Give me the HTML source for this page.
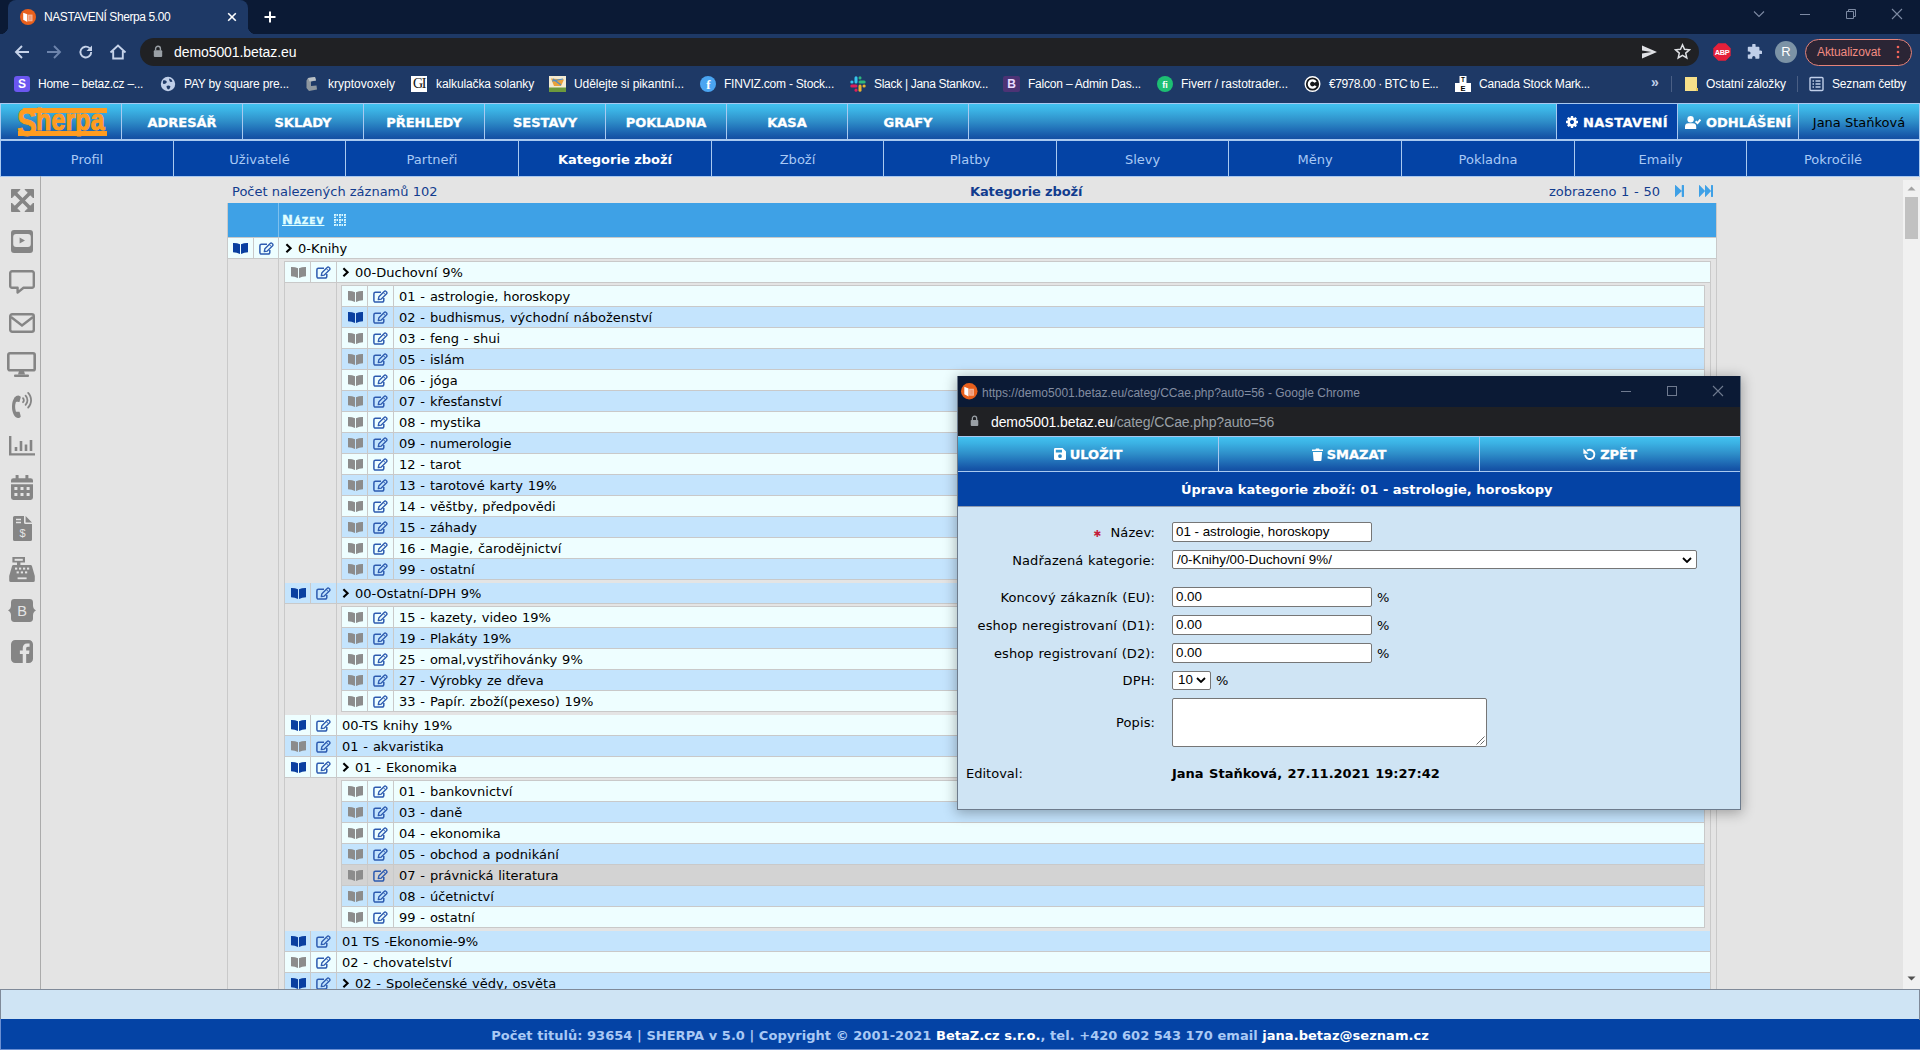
<!DOCTYPE html>
<html lang="cs"><head><meta charset="utf-8"><title>NASTAVENÍ Sherpa 5.00</title>
<style>
*{box-sizing:border-box;margin:0;padding:0}
html,body{width:1920px;height:1050px;overflow:hidden;background:#e4e4e4}
body{position:relative;font-family:"DejaVu Sans","Liberation Sans",sans-serif;font-size:13px;color:#000}
.abs{position:absolute}
.ui{font-family:"Liberation Sans",sans-serif}
.t{position:absolute;white-space:pre;line-height:1}
/* chrome top */
#tabstrip{position:absolute;left:0;top:0;width:1920px;height:34px;background:#0b1a35}
#tab{position:absolute;left:8px;top:0;width:240px;height:34px;background:#1e3966;border-radius:8px 8px 0 0}
#tab:before,#tab:after{content:"";position:absolute;bottom:0;width:8px;height:8px;background:radial-gradient(circle at 0 0,transparent 8px,#1e3966 8.5px)}
#tab:before{left:-8px}
#tab:after{right:-8px;background:radial-gradient(circle at 100% 0,transparent 8px,#1e3966 8.5px)}
#toolbar{position:absolute;left:0;top:34px;width:1920px;height:69px;background:#1e3966}
#omni{position:absolute;left:140px;top:38px;width:1559px;height:28px;border-radius:14px;background:#202124}
.bm{position:absolute;top:77px;font-family:"Liberation Sans",sans-serif;font-size:12px;color:#fff;white-space:pre;line-height:15px}
/* app header */
#nav{position:absolute;left:0;top:103px;width:1920px;height:74px;background:#a9c9f0}
.nc{position:absolute;top:104px;height:35px;background:linear-gradient(#42c2f0 0%,#3bb2e4 18%,#2f90ca 48%,#2170b8 72%,#1656a8 92%,#144fa3 100%);color:#fff;font-weight:bold;font-size:13px;text-align:center;line-height:37px;white-space:pre;-webkit-text-stroke:.3px #fff}
#subnav{display:none}
.sc{position:absolute;top:0;height:35px;background:#0443a5;color:#a9c9f5;font-size:13px;text-align:center;line-height:37px;white-space:pre}
/* content */
.row{position:absolute;height:20px;font-size:13px;line-height:20px;white-space:pre;word-spacing:.7px}
.row .c{position:absolute;top:0;height:20px}
.l{background:#eefeff}.d{background:#c4e4fd}.h{background:#d3d3d3}
.ln{position:absolute;background:#c9c9c9}

</style></head>
<body>
<div id="tabstrip"></div><div id="toolbar"></div><div id="tab"></div>
<svg class="abs" style="left:20px;top:9px" width="16" height="16" viewBox="0 0 16 16"><circle cx="8" cy="8" r="8" fill="#e8601c"/><path d="M3.2 3.7 L7.3 5.3 V13.1 L3.2 10.8 Z" fill="#fff"/><path d="M7.9 5.6 H12.5 V12.3 H7.9 Z" fill="#f3b69c"/><path d="M9 6.6 H11.5 V11.3 H9 Z" fill="#ee9a78"/></svg>
<div class="t ui" style="left:44px;top:11px;font-size:12px;color:#fff;letter-spacing:-.42px">NASTAVENÍ Sherpa 5.00</div>
<svg class="abs" style="left:227px;top:12px" width="10" height="10" viewBox="0 0 10 10"><path d="M1.2 1.2 L8.8 8.8 M8.8 1.2 L1.2 8.8" stroke="#fff" stroke-width="1.6" fill="none"/></svg>
<svg class="abs" style="left:263px;top:10px" width="14" height="14" viewBox="0 0 14 14"><path d="M7 1.5 V12.5 M1.5 7 H12.5" stroke="#fff" stroke-width="2" fill="none"/></svg>
<svg class="abs" style="left:1752px;top:8px" width="14" height="12" viewBox="0 0 14 12"><path d="M2 3.5 L7 8.5 L12 3.5" stroke="#7d8aa3" stroke-width="1.1" fill="none"/></svg>
<div class="abs" style="left:1800px;top:14px;width:10px;height:1px;background:#7d8aa3"></div>
<svg class="abs" style="left:1845px;top:8px" width="12" height="12" viewBox="0 0 12 12"><path d="M1.5 3.5 H8.5 V10.5 H1.5 Z M3.5 3.5 V1.5 H10.5 V8.5 H8.5" stroke="#7d8aa3" stroke-width="1" fill="none"/></svg>
<svg class="abs" style="left:1891px;top:8px" width="12" height="12" viewBox="0 0 12 12"><path d="M1 1 L11 11 M11 1 L1 11" stroke="#7d8aa3" stroke-width="1.1" fill="none"/></svg>
<svg class="abs" style="left:14px;top:44px" width="16" height="16" viewBox="0 0 16 16"><path d="M15 8 H2.5 M8 2 L2 8 L8 14" stroke="#c6d3ea" stroke-width="1.9" fill="none"/></svg>
<svg class="abs" style="left:46px;top:44px" width="16" height="16" viewBox="0 0 16 16"><path d="M1 8 H13.5 M8 2 L14 8 L8 14" stroke="#6d84ac" stroke-width="1.9" fill="none"/></svg>
<svg class="abs" style="left:78px;top:44px" width="16" height="16" viewBox="0 0 16 16"><path d="M13.2 8 A5.4 5.4 0 1 1 11.6 4.2" stroke="#c6d3ea" stroke-width="1.9" fill="none"/><path d="M14 1.5 V7 H8.5 Z" fill="#c6d3ea"/></svg>
<svg class="abs" style="left:109px;top:43px" width="18" height="18" viewBox="0 0 18 18"><path d="M1.5 9.5 L9 2.5 L16.5 9.5 M4.2 8 V15.5 H13.8 V8" stroke="#c6d3ea" stroke-width="1.9" fill="none"/></svg>
<div id="omni"></div>
<svg class="abs" style="left:153px;top:45px" width="10" height="13" viewBox="0 0 10 13"><path d="M2.6 5.5 V3.6 a2.4 2.4 0 0 1 4.8 0 V5.5" stroke="#9aa0a6" stroke-width="1.4" fill="none"/><rect x="0.8" y="5.3" width="8.4" height="6.7" rx="1" fill="#9aa0a6"/></svg>
<div class="t ui" style="left:174px;top:45px;font-size:14px;color:#fff;letter-spacing:-.08px">demo5001.betaz.eu</div>
<svg class="abs" style="left:1641px;top:44px" width="17" height="16" viewBox="0 0 17 16"><path d="M1 1.5 L16 8 L1 14.5 L1 9.6 L10.5 8 L1 6.4 Z" fill="#dfe1e5"/></svg>
<svg class="abs" style="left:1674px;top:43px" width="17" height="17" viewBox="0 0 17 17"><path d="M8.5 1.8 L10.5 6.3 L15.4 6.8 L11.7 10.1 L12.8 14.9 L8.5 12.4 L4.2 14.9 L5.3 10.1 L1.6 6.8 L6.5 6.3 Z" stroke="#dfe1e5" stroke-width="1.5" fill="none" stroke-linejoin="miter"/></svg>
<svg class="abs" style="left:1713px;top:43px" width="18" height="18" viewBox="0 0 18 18"><path d="M5.3 0.3 H12.7 L17.7 5.3 V12.7 L12.7 17.7 H5.3 L0.3 12.7 V5.3 Z" fill="#e5203a"/><text x="9" y="11.7" text-anchor="middle" font-family="Liberation Sans,sans-serif" font-weight="bold" font-size="7.4" fill="#fff" letter-spacing="-.3">ABP</text></svg>
<svg class="abs" style="left:1746px;top:44px" width="16" height="16" viewBox="0 0 16 16"><path d="M6.2 1.2 a1.7 1.7 0 0 1 3.4 0 V2.8 H12.6 a0.8 0.8 0 0 1 .8 .8 V6.6 H14.8 a1.7 1.7 0 0 1 0 3.4 H13.4 V14 a.8 .8 0 0 1 -.8 .8 H9.4 V13.6 a1.6 1.6 0 0 0 -3.2 0 V14.8 H2.6 a.8 .8 0 0 1 -.8 -.8 V10.6 H3 a1.6 1.6 0 0 0 0 -3.2 H1.8 V3.6 a.8 .8 0 0 1 .8 -.8 H6.2 Z" fill="#c0cfe9"/></svg>
<div class="abs ui" style="left:1775px;top:41px;width:22px;height:22px;border-radius:11px;background:#7c93a6;color:#fff;font-size:13px;line-height:22px;text-align:center">R</div>
<div class="abs" style="left:1805px;top:39px;width:107px;height:27px;border-radius:14px;border:1px solid #e58379;background:#2b2535"></div>
<div class="t ui" style="left:1817px;top:46px;font-size:12px;color:#f28b82;letter-spacing:-.1px">Aktualizovat</div>
<svg class="abs" style="left:1896px;top:45px" width="4" height="14" viewBox="0 0 4 14"><circle cx="2" cy="2" r="1.3" fill="#f2645a"/><circle cx="2" cy="7" r="1.3" fill="#f2645a"/><circle cx="2" cy="12" r="1.3" fill="#f2645a"/></svg>
<div class="abs ui" style="left:14px;top:76px;width:16px;height:16px;border-radius:3px;background:#6b57f0;color:#fff;font-weight:bold;font-size:12px;line-height:16px;text-align:center">S</div>
<div class="bm" style="left:38px;letter-spacing:-0.25px">Home – betaz.cz –...</div>
<svg class="abs" style="left:160px;top:76px" width="16" height="16" viewBox="0 0 16 16"><circle cx="8" cy="8" r="7.2" fill="#c0cfe9"/><path d="M3 4.5 Q6 3.5 7 6 Q5.5 8.5 3.5 8 Q2.5 7 3 4.5 Z M9 2.5 Q12 3 12.5 5.5 Q10.5 6.5 9.5 5 Z M6.5 10 Q9 9 10.5 10.5 Q10 13 8 13.5 Q6.5 12.5 6.5 10 Z" fill="#1f3a68"/></svg>
<div class="bm" style="left:184px;letter-spacing:-0.19px">PAY by square pre...</div>
<svg class="abs" style="left:304px;top:76px" width="16" height="16" viewBox="0 0 16 16"><path d="M4 2 L11 1 L12 4.5 L7 5.5 L7 10 L12.5 9.5 L13 13.5 L5 15 L2.5 12 L2.5 4.5 Z" fill="#8e979f"/><path d="M4 2 L11 1 L12 4.5 L5.5 5.5 Z" fill="#b9c0c6"/></svg>
<div class="bm" style="left:328px;letter-spacing:0.02px">kryptovoxely</div>
<div class="abs" style="left:411px;top:76px;width:16px;height:16px;background:#fff;color:#111;font-family:'Liberation Serif',serif;font-size:14px;line-height:16px;text-align:center;letter-spacing:-1.5px;overflow:hidden">GI</div>
<div class="bm" style="left:436px;letter-spacing:-0.11px">kalkulačka solanky</div>
<svg class="abs" style="left:549px;top:76px" width="17" height="16" viewBox="0 0 17 16"><rect width="17" height="16" fill="#f3ead2"/><rect y="11.5" width="17" height="4.5" fill="#6d9a3c"/><path d="M2 2.5 L15 3.5 L12 10 L5 10 Z" fill="#e9a23b"/><path d="M3 5 L14 3 M4 3 L12 9" stroke="#4f8ec9" stroke-width="1.2"/></svg>
<div class="bm" style="left:574px;letter-spacing:-0.06px">Udělejte si pikantní...</div>
<svg class="abs" style="left:700px;top:76px" width="16" height="16" viewBox="0 0 16 16"><circle cx="8" cy="8" r="8" fill="#4aa5f2"/><text x="8.3" y="13" text-anchor="middle" font-family="Liberation Serif,serif" font-weight="bold" font-size="13" fill="#fff">f</text></svg>
<div class="bm" style="left:724px;letter-spacing:-0.22px">FINVIZ.com - Stock...</div>
<svg class="abs" style="left:850px;top:76px" width="16" height="16" viewBox="0 0 16 16"><g stroke-width="3" stroke-linecap="round"><path d="M6 1.8 V6" stroke="#36c5f0"/><path d="M1.8 6 H2" stroke="#36c5f0"/><path d="M10 10 V14.2" stroke="#ecb22e"/><path d="M14 10 H14.2" stroke="#ecb22e"/><path d="M10 6 H14.2" stroke="#2eb67d"/><path d="M10 1.8 V2" stroke="#2eb67d"/><path d="M1.8 10 H6" stroke="#e01e5a"/><path d="M6 14 V14.2" stroke="#e01e5a"/></g></svg>
<div class="bm" style="left:874px;letter-spacing:-0.30px">Slack | Jana Stankov...</div>
<div class="abs ui" style="left:1003px;top:76px;width:17px;height:16px;border-radius:2px;background:#4d3375;color:#eadcff;font-weight:bold;font-size:12px;line-height:16px;text-align:center">B</div>
<div class="bm" style="left:1028px;letter-spacing:-0.21px">Falcon – Admin Das...</div>
<svg class="abs" style="left:1157px;top:76px" width="16" height="16" viewBox="0 0 16 16"><circle cx="8" cy="8" r="8" fill="#1dbf73"/><text x="8" y="11.6" text-anchor="middle" font-family="Liberation Sans,sans-serif" font-weight="bold" font-size="9" fill="#fff">fi</text></svg>
<div class="bm" style="left:1181px;letter-spacing:-0.04px">Fiverr / rastotrader...</div>
<svg class="abs" style="left:1304px;top:76px" width="17" height="16" viewBox="0 0 17 16"><circle cx="8.5" cy="8" r="7.3" fill="#15171a" stroke="#fff" stroke-width="1.4"/><path d="M11.6 6.2 A3.6 3.6 0 1 0 11.6 9.8" stroke="#fff" stroke-width="2.4" fill="none"/></svg>
<div class="bm" style="left:1329px;letter-spacing:-0.47px">€7978.00 · BTC to E...</div>
<svg class="abs" style="left:1455px;top:76px" width="16" height="16" viewBox="0 0 16 16"><rect x="4.5" y="0" width="7" height="7" fill="#fff"/><rect x="0" y="7" width="16" height="9" fill="#fff"/><text x="8" y="6" text-anchor="middle" font-family="Liberation Sans,sans-serif" font-weight="bold" font-size="6.5" fill="#000">T</text><text x="8" y="14.6" text-anchor="middle" font-family="Liberation Sans,sans-serif" font-weight="bold" font-size="7.5" fill="#000">E</text></svg>
<div class="bm" style="left:1479px;letter-spacing:-0.22px">Canada Stock Mark...</div>
<svg class="abs" style="left:1684px;top:76px" width="15" height="16" viewBox="0 0 15 16"><path d="M1 1 H13 V13 H14 V15 H1 Z" fill="#f7e08a"/><path d="M12 12 H14 V15 H12 Z" fill="#e9c95a"/></svg>
<div class="bm" style="left:1706px;letter-spacing:-0.14px">Ostatní záložky</div>
<svg class="abs" style="left:1809px;top:76px" width="15" height="16" viewBox="0 0 15 16"><rect x="1" y="1.5" width="13" height="13" rx="1" fill="none" stroke="#c0cfe9" stroke-width="1.4"/><path d="M3.5 5 H5 M6.5 5 H11.5 M3.5 8 H5 M6.5 8 H11.5 M3.5 11 H5 M6.5 11 H11.5" stroke="#c0cfe9" stroke-width="1.4"/></svg>
<div class="bm" style="left:1832px;letter-spacing:-0.17px">Seznam četby</div>
<div class="t ui" style="left:1651px;top:75px;font-size:14px;color:#c0cfe9;font-weight:bold">»</div>
<div class="abs" style="left:1671px;top:76px;width:1px;height:16px;background:#4a5f85"></div>
<div class="abs" style="left:1797px;top:76px;width:1px;height:16px;background:#4a5f85"></div>
<div id="nav"></div>
<div class="nc" style="left:1px;width:120px;"><span class="t" style="left:16px;top:4px;width:90px;height:28px;overflow:visible"><span class="abs" style="left:6px;top:.3px;width:83.7px;height:4.3px;background:#ff9c1f"></span><span class="abs" style="left:1px;top:23.2px;width:88.7px;height:4.6px;background:#ff9c1f"></span><span class="t ui" style="left:0px;top:-4.4px;font-size:38px;font-weight:bold;color:#ff9c1f;transform-origin:0 0;transform:scale(.78,1);-webkit-text-stroke:.8px #ff9c1f">S</span><span class="t ui" style="left:18.5px;top:-2.3px;font-size:29px;font-weight:bold;color:#ff9c1f;transform-origin:0 0;transform:scale(.855,1);letter-spacing:.3px;-webkit-text-stroke:1.1px #ff9c1f">herpa</span></span></div>
<div class="nc" style="left:122px;width:120px;">ADRESÁŘ</div>
<div class="nc" style="left:243px;width:120px;">SKLADY</div>
<div class="nc" style="left:364px;width:120px;">PŘEHLEDY</div>
<div class="nc" style="left:485px;width:120px;">SESTAVY</div>
<div class="nc" style="left:606px;width:120px;">POKLADNA</div>
<div class="nc" style="left:727px;width:120px;">KASA</div>
<div class="nc" style="left:848px;width:120px;">GRAFY</div>
<div class="nc" style="left:969px;width:587px;"></div>
<div class="nc" style="left:1557px;width:120px;background:#0443a5;letter-spacing:.33px;"><svg style="vertical-align:-1px;margin-right:5px" width="12" height="12" viewBox="0 -1408 1536 1536" preserveAspectRatio="none"><path transform="scale(1,-1)" fill="#fff" d="M949 459Q1024 534 1024 640Q1024 746 949 821Q874 896 768 896Q662 896 587 821Q512 746 512 640Q512 534 587 459Q662 384 768 384Q874 384 949 459ZM1536 749V527Q1536 515 1528 504Q1520 493 1508 491L1323 463Q1304 409 1284 372Q1319 322 1391 234Q1401 222 1401 209Q1401 196 1392 186Q1365 149 1293 78Q1221 7 1199 7Q1187 7 1173 16L1035 124Q991 101 944 86Q928 -50 915 -100Q908 -128 879 -128H657Q643 -128 632 -120Q622 -111 621 -98L593 86Q544 102 503 123L362 16Q352 7 337 7Q323 7 312 18Q186 132 147 186Q140 196 140 209Q140 221 148 232Q163 253 199 298Q235 344 253 369Q226 419 212 468L29 495Q16 497 8 508Q0 518 0 531V753Q0 765 8 776Q16 787 27 789L213 817Q227 863 252 909Q212 966 145 1047Q135 1059 135 1071Q135 1081 144 1094Q170 1130 242 1202Q315 1273 337 1273Q350 1273 363 1263L501 1156Q545 1179 592 1194Q608 1330 621 1380Q628 1408 657 1408H879Q893 1408 904 1400Q914 1391 915 1378L943 1194Q992 1178 1033 1157L1175 1264Q1184 1273 1199 1273Q1212 1273 1224 1263Q1353 1144 1389 1093Q1396 1085 1396 1071Q1396 1059 1388 1048Q1373 1027 1337 982Q1301 936 1283 911Q1309 861 1324 813L1507 785Q1520 783 1528 772Q1536 762 1536 749Z"/></svg>NASTAVENÍ</div>
<div class="nc" style="left:1678px;width:120px;"><svg width="16" height="13" viewBox="0 0 16 13" style="vertical-align:-2px;margin-right:5px"><circle cx="5.6" cy="3.2" r="3.2" fill="#fff"/><path d="M0 13 V10.6 a3.4 3.4 0 0 1 3.4 -3.4 H7.8 a3.4 3.4 0 0 1 3.4 3.4 V13 Z" fill="#fff"/><path d="M10.6 5.2 L12.5 7.1 L15.4 3.6" stroke="#fff" stroke-width="2" fill="none"/></svg>ODHLÁŠENÍ</div>
<div class="nc" style="left:1799px;width:120px;color:#000;font-weight:normal;-webkit-text-stroke:0;">Jana Staňková</div>
<div id="subnav"></div>
<div class="sc" style="top:141px;left:1px;width:172px;">Profil</div>
<div class="sc" style="top:141px;left:174px;width:171px;">Uživatelé</div>
<div class="sc" style="top:141px;left:346px;width:172px;">Partneři</div>
<div class="sc" style="top:141px;left:519px;width:192px;color:#fff;font-weight:bold;">Kategorie zboží</div>
<div class="sc" style="top:141px;left:712px;width:171px;">Zboží</div>
<div class="sc" style="top:141px;left:884px;width:172px;">Platby</div>
<div class="sc" style="top:141px;left:1057px;width:171px;">Slevy</div>
<div class="sc" style="top:141px;left:1229px;width:172px;">Měny</div>
<div class="sc" style="top:141px;left:1402px;width:172px;">Pokladna</div>
<div class="sc" style="top:141px;left:1575px;width:171px;">Emaily</div>
<div class="sc" style="top:141px;left:1747px;width:172px;">Pokročilé</div>
<div class="abs" style="left:40px;top:176px;width:1px;height:813px;background:#ababab"></div>
<svg class="abs" style="left:11px;top:189px" width="23" height="23" viewBox="0 0 23 23"><path d="M4 4 L19 19 M19 4 L4 19" stroke="#858585" stroke-width="3.6"/><path d="M0.5 0.5 H9 L0.5 9 Z M22.5 0.5 V9 L14 0.5 Z M0.5 22.5 V14 L9 22.5 Z M22.5 22.5 H14 L22.5 14 Z" fill="#858585" stroke="#858585" stroke-width="1" stroke-linejoin="round"/></svg>
<svg class="abs" style="left:11px;top:230px" width="22" height="23" viewBox="0 0 22 23"><rect width="22" height="23" rx="3" fill="#858585"/><rect x="2.2" y="4" width="17.6" height="13" rx="3" fill="#e4e4e4"/><path d="M8.6 7.6 L14 10.5 L8.6 13.4 Z" fill="#858585"/></svg>
<svg class="abs" style="left:9px;top:270px" width="26" height="24" viewBox="0 0 26 24"><path d="M3 1.3 H23 a1.8 1.8 0 0 1 1.8 1.8 V16 a1.8 1.8 0 0 1 -1.8 1.8 H14.5 L8.6 22.6 V17.8 H3 a1.8 1.8 0 0 1 -1.8 -1.8 V3.1 A1.8 1.8 0 0 1 3 1.3 Z" fill="none" stroke="#858585" stroke-width="2.4" stroke-linejoin="round"/></svg>
<svg class="abs" style="left:9px;top:313px" width="26" height="20" viewBox="0 0 26 20"><rect x="1.2" y="1.2" width="23.6" height="17.6" rx="2" fill="none" stroke="#858585" stroke-width="2.4"/><path d="M2 4 L13 12.4 L24 4" fill="none" stroke="#858585" stroke-width="2.4"/></svg>
<svg class="abs" style="left:7px;top:352px" width="29" height="25" viewBox="0 0 29 25"><rect x="1.3" y="1.3" width="26.4" height="17" rx="1.6" fill="none" stroke="#858585" stroke-width="2.6"/><path d="M12 19 H17 L18 22.6 H11 Z" fill="#858585"/><rect x="7" y="22.6" width="15" height="2.4" rx="1" fill="#858585"/></svg>
<svg style="position:absolute;left:12px;top:392px;" width="20" height="26" viewBox="0 -1522 1408 1778" preserveAspectRatio="none"><path transform="scale(1,-1)" fill="#858585" d="M617 -153Q617 -142 604 -95Q591 -48 573 12Q555 72 553 81Q552 85 548 108Q544 130 540 144Q535 157 526 165Q511 179 475 179Q452 179 405 174Q358 168 334 168Q300 168 287 179Q281 184 276 194Q271 205 268 214Q266 224 262 238Q258 253 257 257Q220 385 220 512Q220 639 257 767Q258 771 262 786Q266 800 268 810Q271 819 276 830Q281 840 287 845Q300 856 334 856Q358 856 405 850Q452 845 475 845Q511 845 526 859Q535 867 540 880Q544 894 548 916Q552 939 553 943Q555 952 573 1012Q591 1072 604 1119Q617 1166 617 1177Q617 1199 574 1230Q530 1260 498 1272Q478 1280 453 1280Q419 1280 355 1262Q298 1245 258 1222Q219 1198 188 1156Q156 1113 142 1086Q127 1058 96 991Q90 979 87 972Q38 865 19 756Q0 647 0 512Q0 377 19 268Q38 159 87 52Q143 -70 170 -109Q233 -200 349 -236Q352 -237 355 -238Q419 -256 453 -256Q478 -256 498 -248Q530 -236 574 -206Q617 -175 617 -153ZM776 760Q750 760 731 779Q712 798 712 824Q712 851 731 870Q768 907 768 960Q768 1012 731 1051Q712 1070 712 1096Q712 1122 731 1141Q750 1160 776 1160Q802 1160 821 1141Q896 1066 896 960Q896 854 821 779Q800 760 776 760ZM912 598Q893 617 893 643Q893 669 912 688Q1024 802 1024 960Q1024 1118 912 1232Q893 1251 893 1277Q893 1303 912 1322Q931 1341 957 1341Q983 1341 1002 1322Q1152 1172 1152 960Q1152 748 1002 598Q984 579 957 579Q930 579 912 598ZM1093 417Q1074 436 1074 462Q1074 488 1093 507Q1183 598 1232 715Q1280 832 1280 960Q1280 1088 1232 1205Q1183 1322 1093 1413Q1074 1432 1074 1458Q1074 1484 1093 1503Q1112 1522 1138 1522Q1164 1522 1183 1503Q1292 1394 1350 1254Q1408 1114 1408 960Q1408 806 1350 666Q1292 526 1183 417Q1165 398 1138 398Q1111 398 1093 417Z"/></svg>
<svg class="abs" style="left:9px;top:436px" width="26" height="20" viewBox="0 0 26 20"><path d="M1.2 0 V18.4 H26" fill="none" stroke="#858585" stroke-width="2.4"/><path d="M7 15 V11 M12 15 V5 M17 15 V8.5 M22 15 V4" stroke="#858585" stroke-width="2.6"/></svg>
<svg class="abs" style="left:11px;top:475px" width="22" height="25" viewBox="0 0 22 25"><path d="M0 9.3 H22 V22.6 a2.4 2.4 0 0 1 -2.4 2.4 H2.4 A2.4 2.4 0 0 1 0 22.6 Z M2.4 3.2 H19.6 a2.4 2.4 0 0 1 2.4 2.4 V7.6 H0 V5.6 A2.4 2.4 0 0 1 2.4 3.2 Z" fill="#858585"/><rect x="4.6" y="0" width="3" height="5" rx=".6" fill="#858585"/><rect x="14.4" y="0" width="3" height="5" rx=".6" fill="#858585"/><g fill="#e4e4e4"><rect x="3.4" y="12" width="3" height="3"/><rect x="9.5" y="12" width="3" height="3"/><rect x="15.6" y="12" width="3" height="3"/><rect x="3.4" y="18" width="3" height="3"/><rect x="9.5" y="18" width="3" height="3"/><rect x="15.6" y="18" width="3" height="3"/></g></svg>
<svg class="abs" style="left:13px;top:516px" width="19" height="25" viewBox="0 0 19 25"><path d="M0 1.6 A1.6 1.6 0 0 1 1.6 0 H11 V6.4 a1.6 1.6 0 0 0 1.6 1.6 H19 V23.4 a1.6 1.6 0 0 1 -1.6 1.6 H1.6 A1.6 1.6 0 0 1 0 23.4 Z M12.6 0 L19 6.4 H12.6 Z" fill="#858585"/><path d="M3 3.6 H8 M3 6.6 H8" stroke="#e4e4e4" stroke-width="1.5"/><text x="9.5" y="20.5" text-anchor="middle" font-family="Liberation Sans,sans-serif" font-size="11" fill="#e4e4e4">$</text></svg>
<svg class="abs" style="left:9px;top:557px" width="26" height="25" viewBox="0 0 26 25"><path d="M3.4 0 H16 V5.6 H11.4 V8 H21.4 a1.6 1.6 0 0 1 1.6 1.3 L25.8 19 V23.4 a1.6 1.6 0 0 1 -1.6 1.6 H1.8 A1.6 1.6 0 0 1 .2 23.4 V19 L3 9.3 A1.6 1.6 0 0 1 4.6 8 H8 V5.6 H3.4 Z" fill="#858585"/><g fill="#e4e4e4"><rect x="5.6" y="1.8" width="8.2" height="2"/><rect x="6" y="10.6" width="2.2" height="2"/><rect x="10" y="10.6" width="2.2" height="2"/><rect x="14" y="10.6" width="2.2" height="2"/><rect x="18" y="10.6" width="2.2" height="2"/><rect x="7.6" y="14.4" width="2.2" height="2"/><rect x="11.8" y="14.4" width="2.2" height="2"/><rect x="16" y="14.4" width="2.2" height="2"/><rect x="8.6" y="20.4" width="9" height="1.8"/></g></svg>
<svg class="abs" style="left:8px;top:599px" width="28" height="23" viewBox="0 0 28 23"><path d="M6.4 0 H21.6 a3.4 3.4 0 0 1 3.4 3.4 V6.6 Q25 10 28 11.5 Q25 13 25 16.4 V19.6 a3.4 3.4 0 0 1 -3.4 3.4 H6.4 A3.4 3.4 0 0 1 3 19.6 V16.4 Q3 13 0 11.5 Q3 10 3 6.6 V3.4 A3.4 3.4 0 0 1 6.4 0 Z" fill="#858585"/><text x="14" y="16.6" text-anchor="middle" font-family="Liberation Sans,sans-serif" font-size="14.5" fill="#e4e4e4">B</text></svg>
<svg style="position:absolute;left:11px;top:640px;" width="22" height="23" viewBox="0 -1408 1536 1536" preserveAspectRatio="none"><path transform="scale(1,-1)" fill="#858585" d="M1248 1408Q1367 1408 1452 1324Q1536 1239 1536 1120V160Q1536 41 1452 -44Q1367 -128 1248 -128H1060V467H1259L1289 699H1060V847Q1060 903 1084 931Q1107 959 1175 959L1297 960V1167Q1234 1176 1119 1176Q983 1176 902 1096Q820 1016 820 870V699H620V467H820V-128H288Q169 -128 84 -44Q0 41 0 160V1120Q0 1239 84 1324Q169 1408 288 1408Z"/></svg>
<div class="t" style="left:232px;top:184px;font-size:13px;color:#123c8e;line-height:15px">Počet nalezených záznamů 102</div>
<div class="t" style="left:970px;top:184px;font-size:13px;color:#123c8e;line-height:15px;font-weight:bold;letter-spacing:-.12px">Kategorie zboží</div>
<div class="t" style="left:1549px;top:184px;font-size:13px;color:#123c8e;line-height:15px;word-spacing:.6px">zobrazeno 1 - 50</div>
<svg style="position:absolute;left:1675px;top:185px;" width="9" height="12" viewBox="0 -1409 1024 1539" preserveAspectRatio="none"><path transform="scale(1,-1)" fill="#3ea0e6" d="M45 -115Q26 -134 13 -128Q0 -122 0 -96V1376Q0 1402 13 1408Q26 1414 45 1395L755 685Q764 676 768 666V1344Q768 1370 787 1389Q806 1408 832 1408H960Q986 1408 1005 1389Q1024 1370 1024 1344V-64Q1024 -90 1005 -109Q986 -128 960 -128H832Q806 -128 787 -109Q768 -90 768 -64V614Q764 604 755 595Z"/></svg>
<svg style="position:absolute;left:1699px;top:185px;" width="14" height="12" viewBox="0 -1409 1792 1539" preserveAspectRatio="none"><path transform="scale(1,-1)" fill="#3ea0e6" d="M45 -115Q26 -134 13 -128Q0 -122 0 -96V1376Q0 1402 13 1408Q26 1414 45 1395L755 685Q764 676 768 666V1376Q768 1402 781 1408Q794 1414 813 1395L1523 685Q1532 676 1536 666V1344Q1536 1370 1555 1389Q1574 1408 1600 1408H1728Q1754 1408 1773 1389Q1792 1370 1792 1344V-64Q1792 -90 1773 -109Q1754 -128 1728 -128H1600Q1574 -128 1555 -109Q1536 -90 1536 -64V614Q1532 604 1523 595L813 -115Q794 -134 781 -128Q768 -122 768 -96V614Q764 604 755 595Z"/></svg>
<div class="abs" style="left:227px;top:203px;width:1490px;height:787px;background:#c9c9c9"></div>
<div class="abs" style="left:228px;top:203px;width:1488px;height:34px;background:#3ea1e6"></div>
<div class="abs" style="left:278px;top:203px;width:1px;height:34px;background:#7dc0ee"></div>
<div class="t" style="left:282px;top:211px;font-size:13px;line-height:17px;color:#e0ffff;font-weight:bold;font-variant:small-caps;letter-spacing:1px;-webkit-text-stroke:.3px #e0ffff;text-decoration:underline">Název</div>
<svg class="abs" style="left:334px;top:214px" width="12" height="12" viewBox="0 0 12 12"><path d="M0 1 H12 M0 6 H12 M0 11 H12 M1 0 V12 M6 0 V12 M11 0 V12" fill="none" stroke="#d6f6ff" stroke-width="2" stroke-dasharray="1.5 1"/></svg>
<div class="abs" style="left:228px;top:259px;width:1488px;height:731px;background:#e4e4e4"></div>
<div class="ln" style="left:253px;top:238px;width:1px;height:21px"></div>
<div class="ln" style="left:278px;top:238px;width:1px;height:752px"></div>
<div class="ln" style="left:284px;top:261px;width:1427px;height:729px"></div>
<div class="abs" style="left:285px;top:262px;width:1425px;height:728px;background:#e4e4e4"></div>
<div class="ln" style="left:336px;top:262px;width:1px;height:728px"></div>
<div class="ln" style="left:341px;top:285px;width:1364px;height:295px"></div>
<div class="ln" style="left:341px;top:606px;width:1364px;height:106px"></div>
<div class="ln" style="left:341px;top:780px;width:1364px;height:148px"></div>
<div class="row l" style="left:228px;top:238px;width:1488px"><span class="ln" style="left:25px;top:0;width:1px;height:20px"></span><span class="ln" style="left:50px;top:0;width:1px;height:20px"></span><svg class="abs" style="left:5px;top:4px" width="15" height="12" viewBox="0 0 15 12"><path d="M0 .9 Q3.8 .7 7 2.3 V11.9 Q3.8 10.2 0 10.2 Z M15 .9 Q11.2 .7 8 2.3 V11.9 Q11.2 10.2 15 10.2 Z" fill="#0a3fa0"/></svg><svg class="abs" style="left:31px;top:4px" width="15" height="13" viewBox="0 0 15 13"><g fill="none" stroke="#2d5bb0" stroke-width="1.5" stroke-linejoin="round"><path d="M8 2.3 H2.4 a1.5 1.5 0 0 0 -1.5 1.5 V10.6 a1.5 1.5 0 0 0 1.5 1.5 H9.3 a1.5 1.5 0 0 0 1.5 -1.5 V8"/><path d="M5.3 9.6 L5.9 6.7 L11.2 1.4 a1.25 1.25 0 0 1 1.8 0 L13.6 2 a1.25 1.25 0 0 1 0 1.8 L8.3 9.1 Z" stroke-width="1.35"/><path d="M10.3 2.6 L12.4 4.7" stroke-width="1"/></g></svg><svg class="abs" style="left:57px;top:5px" width="7.5" height="10.5" viewBox="0 0 7.5 10.5"><path d="M1.4 1.2 L5.6 5.25 L1.4 9.3" fill="none" stroke="#000" stroke-width="2.1"/></svg><span class="t" style="left:70px;top:1px;line-height:20px">0-Knihy</span></div>
<div class="ln" style="left:228px;top:258px;width:1488px;height:1px"></div>
<div class="row l" style="left:285px;top:262px;width:1425px"><span class="ln" style="left:25px;top:0;width:1px;height:20px"></span><span class="ln" style="left:51px;top:0;width:1px;height:20px"></span><svg class="abs" style="left:6px;top:4px" width="15" height="12" viewBox="0 0 15 12"><path d="M0 .9 Q3.8 .7 7 2.3 V11.9 Q3.8 10.2 0 10.2 Z M15 .9 Q11.2 .7 8 2.3 V11.9 Q11.2 10.2 15 10.2 Z" fill="#8c8c8c"/></svg><svg class="abs" style="left:31px;top:4px" width="15" height="13" viewBox="0 0 15 13"><g fill="none" stroke="#2d5bb0" stroke-width="1.5" stroke-linejoin="round"><path d="M8 2.3 H2.4 a1.5 1.5 0 0 0 -1.5 1.5 V10.6 a1.5 1.5 0 0 0 1.5 1.5 H9.3 a1.5 1.5 0 0 0 1.5 -1.5 V8"/><path d="M5.3 9.6 L5.9 6.7 L11.2 1.4 a1.25 1.25 0 0 1 1.8 0 L13.6 2 a1.25 1.25 0 0 1 0 1.8 L8.3 9.1 Z" stroke-width="1.35"/><path d="M10.3 2.6 L12.4 4.7" stroke-width="1"/></g></svg><svg class="abs" style="left:57px;top:5px" width="7.5" height="10.5" viewBox="0 0 7.5 10.5"><path d="M1.4 1.2 L5.6 5.25 L1.4 9.3" fill="none" stroke="#000" stroke-width="2.1"/></svg><span class="t" style="left:70px;top:1px;line-height:20px">00-Duchovní 9%</span></div>
<div class="ln" style="left:285px;top:282px;width:1425px;height:1px"></div>
<div class="row l" style="left:342px;top:286px;width:1362px"><span class="ln" style="left:25px;top:0;width:1px;height:20px"></span><span class="ln" style="left:51px;top:0;width:1px;height:20px"></span><svg class="abs" style="left:6px;top:4px" width="15" height="12" viewBox="0 0 15 12"><path d="M0 .9 Q3.8 .7 7 2.3 V11.9 Q3.8 10.2 0 10.2 Z M15 .9 Q11.2 .7 8 2.3 V11.9 Q11.2 10.2 15 10.2 Z" fill="#8c8c8c"/></svg><svg class="abs" style="left:31px;top:4px" width="15" height="13" viewBox="0 0 15 13"><g fill="none" stroke="#2d5bb0" stroke-width="1.5" stroke-linejoin="round"><path d="M8 2.3 H2.4 a1.5 1.5 0 0 0 -1.5 1.5 V10.6 a1.5 1.5 0 0 0 1.5 1.5 H9.3 a1.5 1.5 0 0 0 1.5 -1.5 V8"/><path d="M5.3 9.6 L5.9 6.7 L11.2 1.4 a1.25 1.25 0 0 1 1.8 0 L13.6 2 a1.25 1.25 0 0 1 0 1.8 L8.3 9.1 Z" stroke-width="1.35"/><path d="M10.3 2.6 L12.4 4.7" stroke-width="1"/></g></svg><span class="t" style="left:57px;top:1px;line-height:20px">01 - astrologie, horoskopy</span></div>
<div class="ln" style="left:342px;top:306px;width:1362px;height:1px"></div>
<div class="row d" style="left:342px;top:307px;width:1362px"><span class="ln" style="left:25px;top:0;width:1px;height:20px"></span><span class="ln" style="left:51px;top:0;width:1px;height:20px"></span><svg class="abs" style="left:6px;top:4px" width="15" height="12" viewBox="0 0 15 12"><path d="M0 .9 Q3.8 .7 7 2.3 V11.9 Q3.8 10.2 0 10.2 Z M15 .9 Q11.2 .7 8 2.3 V11.9 Q11.2 10.2 15 10.2 Z" fill="#0a3fa0"/></svg><svg class="abs" style="left:31px;top:4px" width="15" height="13" viewBox="0 0 15 13"><g fill="none" stroke="#2d5bb0" stroke-width="1.5" stroke-linejoin="round"><path d="M8 2.3 H2.4 a1.5 1.5 0 0 0 -1.5 1.5 V10.6 a1.5 1.5 0 0 0 1.5 1.5 H9.3 a1.5 1.5 0 0 0 1.5 -1.5 V8"/><path d="M5.3 9.6 L5.9 6.7 L11.2 1.4 a1.25 1.25 0 0 1 1.8 0 L13.6 2 a1.25 1.25 0 0 1 0 1.8 L8.3 9.1 Z" stroke-width="1.35"/><path d="M10.3 2.6 L12.4 4.7" stroke-width="1"/></g></svg><span class="t" style="left:57px;top:1px;line-height:20px">02 - budhismus, východní náboženství</span></div>
<div class="ln" style="left:342px;top:327px;width:1362px;height:1px"></div>
<div class="row l" style="left:342px;top:328px;width:1362px"><span class="ln" style="left:25px;top:0;width:1px;height:20px"></span><span class="ln" style="left:51px;top:0;width:1px;height:20px"></span><svg class="abs" style="left:6px;top:4px" width="15" height="12" viewBox="0 0 15 12"><path d="M0 .9 Q3.8 .7 7 2.3 V11.9 Q3.8 10.2 0 10.2 Z M15 .9 Q11.2 .7 8 2.3 V11.9 Q11.2 10.2 15 10.2 Z" fill="#8c8c8c"/></svg><svg class="abs" style="left:31px;top:4px" width="15" height="13" viewBox="0 0 15 13"><g fill="none" stroke="#2d5bb0" stroke-width="1.5" stroke-linejoin="round"><path d="M8 2.3 H2.4 a1.5 1.5 0 0 0 -1.5 1.5 V10.6 a1.5 1.5 0 0 0 1.5 1.5 H9.3 a1.5 1.5 0 0 0 1.5 -1.5 V8"/><path d="M5.3 9.6 L5.9 6.7 L11.2 1.4 a1.25 1.25 0 0 1 1.8 0 L13.6 2 a1.25 1.25 0 0 1 0 1.8 L8.3 9.1 Z" stroke-width="1.35"/><path d="M10.3 2.6 L12.4 4.7" stroke-width="1"/></g></svg><span class="t" style="left:57px;top:1px;line-height:20px">03 - feng - shui</span></div>
<div class="ln" style="left:342px;top:348px;width:1362px;height:1px"></div>
<div class="row d" style="left:342px;top:349px;width:1362px"><span class="ln" style="left:25px;top:0;width:1px;height:20px"></span><span class="ln" style="left:51px;top:0;width:1px;height:20px"></span><svg class="abs" style="left:6px;top:4px" width="15" height="12" viewBox="0 0 15 12"><path d="M0 .9 Q3.8 .7 7 2.3 V11.9 Q3.8 10.2 0 10.2 Z M15 .9 Q11.2 .7 8 2.3 V11.9 Q11.2 10.2 15 10.2 Z" fill="#8c8c8c"/></svg><svg class="abs" style="left:31px;top:4px" width="15" height="13" viewBox="0 0 15 13"><g fill="none" stroke="#2d5bb0" stroke-width="1.5" stroke-linejoin="round"><path d="M8 2.3 H2.4 a1.5 1.5 0 0 0 -1.5 1.5 V10.6 a1.5 1.5 0 0 0 1.5 1.5 H9.3 a1.5 1.5 0 0 0 1.5 -1.5 V8"/><path d="M5.3 9.6 L5.9 6.7 L11.2 1.4 a1.25 1.25 0 0 1 1.8 0 L13.6 2 a1.25 1.25 0 0 1 0 1.8 L8.3 9.1 Z" stroke-width="1.35"/><path d="M10.3 2.6 L12.4 4.7" stroke-width="1"/></g></svg><span class="t" style="left:57px;top:1px;line-height:20px">05 - islám</span></div>
<div class="ln" style="left:342px;top:369px;width:1362px;height:1px"></div>
<div class="row l" style="left:342px;top:370px;width:1362px"><span class="ln" style="left:25px;top:0;width:1px;height:20px"></span><span class="ln" style="left:51px;top:0;width:1px;height:20px"></span><svg class="abs" style="left:6px;top:4px" width="15" height="12" viewBox="0 0 15 12"><path d="M0 .9 Q3.8 .7 7 2.3 V11.9 Q3.8 10.2 0 10.2 Z M15 .9 Q11.2 .7 8 2.3 V11.9 Q11.2 10.2 15 10.2 Z" fill="#8c8c8c"/></svg><svg class="abs" style="left:31px;top:4px" width="15" height="13" viewBox="0 0 15 13"><g fill="none" stroke="#2d5bb0" stroke-width="1.5" stroke-linejoin="round"><path d="M8 2.3 H2.4 a1.5 1.5 0 0 0 -1.5 1.5 V10.6 a1.5 1.5 0 0 0 1.5 1.5 H9.3 a1.5 1.5 0 0 0 1.5 -1.5 V8"/><path d="M5.3 9.6 L5.9 6.7 L11.2 1.4 a1.25 1.25 0 0 1 1.8 0 L13.6 2 a1.25 1.25 0 0 1 0 1.8 L8.3 9.1 Z" stroke-width="1.35"/><path d="M10.3 2.6 L12.4 4.7" stroke-width="1"/></g></svg><span class="t" style="left:57px;top:1px;line-height:20px">06 - jóga</span></div>
<div class="ln" style="left:342px;top:390px;width:1362px;height:1px"></div>
<div class="row d" style="left:342px;top:391px;width:1362px"><span class="ln" style="left:25px;top:0;width:1px;height:20px"></span><span class="ln" style="left:51px;top:0;width:1px;height:20px"></span><svg class="abs" style="left:6px;top:4px" width="15" height="12" viewBox="0 0 15 12"><path d="M0 .9 Q3.8 .7 7 2.3 V11.9 Q3.8 10.2 0 10.2 Z M15 .9 Q11.2 .7 8 2.3 V11.9 Q11.2 10.2 15 10.2 Z" fill="#8c8c8c"/></svg><svg class="abs" style="left:31px;top:4px" width="15" height="13" viewBox="0 0 15 13"><g fill="none" stroke="#2d5bb0" stroke-width="1.5" stroke-linejoin="round"><path d="M8 2.3 H2.4 a1.5 1.5 0 0 0 -1.5 1.5 V10.6 a1.5 1.5 0 0 0 1.5 1.5 H9.3 a1.5 1.5 0 0 0 1.5 -1.5 V8"/><path d="M5.3 9.6 L5.9 6.7 L11.2 1.4 a1.25 1.25 0 0 1 1.8 0 L13.6 2 a1.25 1.25 0 0 1 0 1.8 L8.3 9.1 Z" stroke-width="1.35"/><path d="M10.3 2.6 L12.4 4.7" stroke-width="1"/></g></svg><span class="t" style="left:57px;top:1px;line-height:20px">07 - křesťanství</span></div>
<div class="ln" style="left:342px;top:411px;width:1362px;height:1px"></div>
<div class="row l" style="left:342px;top:412px;width:1362px"><span class="ln" style="left:25px;top:0;width:1px;height:20px"></span><span class="ln" style="left:51px;top:0;width:1px;height:20px"></span><svg class="abs" style="left:6px;top:4px" width="15" height="12" viewBox="0 0 15 12"><path d="M0 .9 Q3.8 .7 7 2.3 V11.9 Q3.8 10.2 0 10.2 Z M15 .9 Q11.2 .7 8 2.3 V11.9 Q11.2 10.2 15 10.2 Z" fill="#8c8c8c"/></svg><svg class="abs" style="left:31px;top:4px" width="15" height="13" viewBox="0 0 15 13"><g fill="none" stroke="#2d5bb0" stroke-width="1.5" stroke-linejoin="round"><path d="M8 2.3 H2.4 a1.5 1.5 0 0 0 -1.5 1.5 V10.6 a1.5 1.5 0 0 0 1.5 1.5 H9.3 a1.5 1.5 0 0 0 1.5 -1.5 V8"/><path d="M5.3 9.6 L5.9 6.7 L11.2 1.4 a1.25 1.25 0 0 1 1.8 0 L13.6 2 a1.25 1.25 0 0 1 0 1.8 L8.3 9.1 Z" stroke-width="1.35"/><path d="M10.3 2.6 L12.4 4.7" stroke-width="1"/></g></svg><span class="t" style="left:57px;top:1px;line-height:20px">08 - mystika</span></div>
<div class="ln" style="left:342px;top:432px;width:1362px;height:1px"></div>
<div class="row d" style="left:342px;top:433px;width:1362px"><span class="ln" style="left:25px;top:0;width:1px;height:20px"></span><span class="ln" style="left:51px;top:0;width:1px;height:20px"></span><svg class="abs" style="left:6px;top:4px" width="15" height="12" viewBox="0 0 15 12"><path d="M0 .9 Q3.8 .7 7 2.3 V11.9 Q3.8 10.2 0 10.2 Z M15 .9 Q11.2 .7 8 2.3 V11.9 Q11.2 10.2 15 10.2 Z" fill="#8c8c8c"/></svg><svg class="abs" style="left:31px;top:4px" width="15" height="13" viewBox="0 0 15 13"><g fill="none" stroke="#2d5bb0" stroke-width="1.5" stroke-linejoin="round"><path d="M8 2.3 H2.4 a1.5 1.5 0 0 0 -1.5 1.5 V10.6 a1.5 1.5 0 0 0 1.5 1.5 H9.3 a1.5 1.5 0 0 0 1.5 -1.5 V8"/><path d="M5.3 9.6 L5.9 6.7 L11.2 1.4 a1.25 1.25 0 0 1 1.8 0 L13.6 2 a1.25 1.25 0 0 1 0 1.8 L8.3 9.1 Z" stroke-width="1.35"/><path d="M10.3 2.6 L12.4 4.7" stroke-width="1"/></g></svg><span class="t" style="left:57px;top:1px;line-height:20px">09 - numerologie</span></div>
<div class="ln" style="left:342px;top:453px;width:1362px;height:1px"></div>
<div class="row l" style="left:342px;top:454px;width:1362px"><span class="ln" style="left:25px;top:0;width:1px;height:20px"></span><span class="ln" style="left:51px;top:0;width:1px;height:20px"></span><svg class="abs" style="left:6px;top:4px" width="15" height="12" viewBox="0 0 15 12"><path d="M0 .9 Q3.8 .7 7 2.3 V11.9 Q3.8 10.2 0 10.2 Z M15 .9 Q11.2 .7 8 2.3 V11.9 Q11.2 10.2 15 10.2 Z" fill="#8c8c8c"/></svg><svg class="abs" style="left:31px;top:4px" width="15" height="13" viewBox="0 0 15 13"><g fill="none" stroke="#2d5bb0" stroke-width="1.5" stroke-linejoin="round"><path d="M8 2.3 H2.4 a1.5 1.5 0 0 0 -1.5 1.5 V10.6 a1.5 1.5 0 0 0 1.5 1.5 H9.3 a1.5 1.5 0 0 0 1.5 -1.5 V8"/><path d="M5.3 9.6 L5.9 6.7 L11.2 1.4 a1.25 1.25 0 0 1 1.8 0 L13.6 2 a1.25 1.25 0 0 1 0 1.8 L8.3 9.1 Z" stroke-width="1.35"/><path d="M10.3 2.6 L12.4 4.7" stroke-width="1"/></g></svg><span class="t" style="left:57px;top:1px;line-height:20px">12 - tarot</span></div>
<div class="ln" style="left:342px;top:474px;width:1362px;height:1px"></div>
<div class="row d" style="left:342px;top:475px;width:1362px"><span class="ln" style="left:25px;top:0;width:1px;height:20px"></span><span class="ln" style="left:51px;top:0;width:1px;height:20px"></span><svg class="abs" style="left:6px;top:4px" width="15" height="12" viewBox="0 0 15 12"><path d="M0 .9 Q3.8 .7 7 2.3 V11.9 Q3.8 10.2 0 10.2 Z M15 .9 Q11.2 .7 8 2.3 V11.9 Q11.2 10.2 15 10.2 Z" fill="#8c8c8c"/></svg><svg class="abs" style="left:31px;top:4px" width="15" height="13" viewBox="0 0 15 13"><g fill="none" stroke="#2d5bb0" stroke-width="1.5" stroke-linejoin="round"><path d="M8 2.3 H2.4 a1.5 1.5 0 0 0 -1.5 1.5 V10.6 a1.5 1.5 0 0 0 1.5 1.5 H9.3 a1.5 1.5 0 0 0 1.5 -1.5 V8"/><path d="M5.3 9.6 L5.9 6.7 L11.2 1.4 a1.25 1.25 0 0 1 1.8 0 L13.6 2 a1.25 1.25 0 0 1 0 1.8 L8.3 9.1 Z" stroke-width="1.35"/><path d="M10.3 2.6 L12.4 4.7" stroke-width="1"/></g></svg><span class="t" style="left:57px;top:1px;line-height:20px">13 - tarotové karty 19%</span></div>
<div class="ln" style="left:342px;top:495px;width:1362px;height:1px"></div>
<div class="row l" style="left:342px;top:496px;width:1362px"><span class="ln" style="left:25px;top:0;width:1px;height:20px"></span><span class="ln" style="left:51px;top:0;width:1px;height:20px"></span><svg class="abs" style="left:6px;top:4px" width="15" height="12" viewBox="0 0 15 12"><path d="M0 .9 Q3.8 .7 7 2.3 V11.9 Q3.8 10.2 0 10.2 Z M15 .9 Q11.2 .7 8 2.3 V11.9 Q11.2 10.2 15 10.2 Z" fill="#8c8c8c"/></svg><svg class="abs" style="left:31px;top:4px" width="15" height="13" viewBox="0 0 15 13"><g fill="none" stroke="#2d5bb0" stroke-width="1.5" stroke-linejoin="round"><path d="M8 2.3 H2.4 a1.5 1.5 0 0 0 -1.5 1.5 V10.6 a1.5 1.5 0 0 0 1.5 1.5 H9.3 a1.5 1.5 0 0 0 1.5 -1.5 V8"/><path d="M5.3 9.6 L5.9 6.7 L11.2 1.4 a1.25 1.25 0 0 1 1.8 0 L13.6 2 a1.25 1.25 0 0 1 0 1.8 L8.3 9.1 Z" stroke-width="1.35"/><path d="M10.3 2.6 L12.4 4.7" stroke-width="1"/></g></svg><span class="t" style="left:57px;top:1px;line-height:20px">14 - věštby, předpovědi</span></div>
<div class="ln" style="left:342px;top:516px;width:1362px;height:1px"></div>
<div class="row d" style="left:342px;top:517px;width:1362px"><span class="ln" style="left:25px;top:0;width:1px;height:20px"></span><span class="ln" style="left:51px;top:0;width:1px;height:20px"></span><svg class="abs" style="left:6px;top:4px" width="15" height="12" viewBox="0 0 15 12"><path d="M0 .9 Q3.8 .7 7 2.3 V11.9 Q3.8 10.2 0 10.2 Z M15 .9 Q11.2 .7 8 2.3 V11.9 Q11.2 10.2 15 10.2 Z" fill="#8c8c8c"/></svg><svg class="abs" style="left:31px;top:4px" width="15" height="13" viewBox="0 0 15 13"><g fill="none" stroke="#2d5bb0" stroke-width="1.5" stroke-linejoin="round"><path d="M8 2.3 H2.4 a1.5 1.5 0 0 0 -1.5 1.5 V10.6 a1.5 1.5 0 0 0 1.5 1.5 H9.3 a1.5 1.5 0 0 0 1.5 -1.5 V8"/><path d="M5.3 9.6 L5.9 6.7 L11.2 1.4 a1.25 1.25 0 0 1 1.8 0 L13.6 2 a1.25 1.25 0 0 1 0 1.8 L8.3 9.1 Z" stroke-width="1.35"/><path d="M10.3 2.6 L12.4 4.7" stroke-width="1"/></g></svg><span class="t" style="left:57px;top:1px;line-height:20px">15 - záhady</span></div>
<div class="ln" style="left:342px;top:537px;width:1362px;height:1px"></div>
<div class="row l" style="left:342px;top:538px;width:1362px"><span class="ln" style="left:25px;top:0;width:1px;height:20px"></span><span class="ln" style="left:51px;top:0;width:1px;height:20px"></span><svg class="abs" style="left:6px;top:4px" width="15" height="12" viewBox="0 0 15 12"><path d="M0 .9 Q3.8 .7 7 2.3 V11.9 Q3.8 10.2 0 10.2 Z M15 .9 Q11.2 .7 8 2.3 V11.9 Q11.2 10.2 15 10.2 Z" fill="#8c8c8c"/></svg><svg class="abs" style="left:31px;top:4px" width="15" height="13" viewBox="0 0 15 13"><g fill="none" stroke="#2d5bb0" stroke-width="1.5" stroke-linejoin="round"><path d="M8 2.3 H2.4 a1.5 1.5 0 0 0 -1.5 1.5 V10.6 a1.5 1.5 0 0 0 1.5 1.5 H9.3 a1.5 1.5 0 0 0 1.5 -1.5 V8"/><path d="M5.3 9.6 L5.9 6.7 L11.2 1.4 a1.25 1.25 0 0 1 1.8 0 L13.6 2 a1.25 1.25 0 0 1 0 1.8 L8.3 9.1 Z" stroke-width="1.35"/><path d="M10.3 2.6 L12.4 4.7" stroke-width="1"/></g></svg><span class="t" style="left:57px;top:1px;line-height:20px">16 - Magie, čarodějnictví</span></div>
<div class="ln" style="left:342px;top:558px;width:1362px;height:1px"></div>
<div class="row d" style="left:342px;top:559px;width:1362px"><span class="ln" style="left:25px;top:0;width:1px;height:20px"></span><span class="ln" style="left:51px;top:0;width:1px;height:20px"></span><svg class="abs" style="left:6px;top:4px" width="15" height="12" viewBox="0 0 15 12"><path d="M0 .9 Q3.8 .7 7 2.3 V11.9 Q3.8 10.2 0 10.2 Z M15 .9 Q11.2 .7 8 2.3 V11.9 Q11.2 10.2 15 10.2 Z" fill="#8c8c8c"/></svg><svg class="abs" style="left:31px;top:4px" width="15" height="13" viewBox="0 0 15 13"><g fill="none" stroke="#2d5bb0" stroke-width="1.5" stroke-linejoin="round"><path d="M8 2.3 H2.4 a1.5 1.5 0 0 0 -1.5 1.5 V10.6 a1.5 1.5 0 0 0 1.5 1.5 H9.3 a1.5 1.5 0 0 0 1.5 -1.5 V8"/><path d="M5.3 9.6 L5.9 6.7 L11.2 1.4 a1.25 1.25 0 0 1 1.8 0 L13.6 2 a1.25 1.25 0 0 1 0 1.8 L8.3 9.1 Z" stroke-width="1.35"/><path d="M10.3 2.6 L12.4 4.7" stroke-width="1"/></g></svg><span class="t" style="left:57px;top:1px;line-height:20px">99 - ostatní</span></div>
<div class="ln" style="left:342px;top:579px;width:1362px;height:1px"></div>
<div class="row d" style="left:285px;top:583px;width:1425px"><span class="ln" style="left:25px;top:0;width:1px;height:20px"></span><span class="ln" style="left:51px;top:0;width:1px;height:20px"></span><svg class="abs" style="left:6px;top:4px" width="15" height="12" viewBox="0 0 15 12"><path d="M0 .9 Q3.8 .7 7 2.3 V11.9 Q3.8 10.2 0 10.2 Z M15 .9 Q11.2 .7 8 2.3 V11.9 Q11.2 10.2 15 10.2 Z" fill="#0a3fa0"/></svg><svg class="abs" style="left:31px;top:4px" width="15" height="13" viewBox="0 0 15 13"><g fill="none" stroke="#2d5bb0" stroke-width="1.5" stroke-linejoin="round"><path d="M8 2.3 H2.4 a1.5 1.5 0 0 0 -1.5 1.5 V10.6 a1.5 1.5 0 0 0 1.5 1.5 H9.3 a1.5 1.5 0 0 0 1.5 -1.5 V8"/><path d="M5.3 9.6 L5.9 6.7 L11.2 1.4 a1.25 1.25 0 0 1 1.8 0 L13.6 2 a1.25 1.25 0 0 1 0 1.8 L8.3 9.1 Z" stroke-width="1.35"/><path d="M10.3 2.6 L12.4 4.7" stroke-width="1"/></g></svg><svg class="abs" style="left:57px;top:5px" width="7.5" height="10.5" viewBox="0 0 7.5 10.5"><path d="M1.4 1.2 L5.6 5.25 L1.4 9.3" fill="none" stroke="#000" stroke-width="2.1"/></svg><span class="t" style="left:70px;top:1px;line-height:20px">00-Ostatní-DPH 9%</span></div>
<div class="ln" style="left:285px;top:603px;width:1425px;height:1px"></div>
<div class="row l" style="left:342px;top:607px;width:1362px"><span class="ln" style="left:25px;top:0;width:1px;height:20px"></span><span class="ln" style="left:51px;top:0;width:1px;height:20px"></span><svg class="abs" style="left:6px;top:4px" width="15" height="12" viewBox="0 0 15 12"><path d="M0 .9 Q3.8 .7 7 2.3 V11.9 Q3.8 10.2 0 10.2 Z M15 .9 Q11.2 .7 8 2.3 V11.9 Q11.2 10.2 15 10.2 Z" fill="#8c8c8c"/></svg><svg class="abs" style="left:31px;top:4px" width="15" height="13" viewBox="0 0 15 13"><g fill="none" stroke="#2d5bb0" stroke-width="1.5" stroke-linejoin="round"><path d="M8 2.3 H2.4 a1.5 1.5 0 0 0 -1.5 1.5 V10.6 a1.5 1.5 0 0 0 1.5 1.5 H9.3 a1.5 1.5 0 0 0 1.5 -1.5 V8"/><path d="M5.3 9.6 L5.9 6.7 L11.2 1.4 a1.25 1.25 0 0 1 1.8 0 L13.6 2 a1.25 1.25 0 0 1 0 1.8 L8.3 9.1 Z" stroke-width="1.35"/><path d="M10.3 2.6 L12.4 4.7" stroke-width="1"/></g></svg><span class="t" style="left:57px;top:1px;line-height:20px">15 - kazety, video 19%</span></div>
<div class="ln" style="left:342px;top:627px;width:1362px;height:1px"></div>
<div class="row d" style="left:342px;top:628px;width:1362px"><span class="ln" style="left:25px;top:0;width:1px;height:20px"></span><span class="ln" style="left:51px;top:0;width:1px;height:20px"></span><svg class="abs" style="left:6px;top:4px" width="15" height="12" viewBox="0 0 15 12"><path d="M0 .9 Q3.8 .7 7 2.3 V11.9 Q3.8 10.2 0 10.2 Z M15 .9 Q11.2 .7 8 2.3 V11.9 Q11.2 10.2 15 10.2 Z" fill="#8c8c8c"/></svg><svg class="abs" style="left:31px;top:4px" width="15" height="13" viewBox="0 0 15 13"><g fill="none" stroke="#2d5bb0" stroke-width="1.5" stroke-linejoin="round"><path d="M8 2.3 H2.4 a1.5 1.5 0 0 0 -1.5 1.5 V10.6 a1.5 1.5 0 0 0 1.5 1.5 H9.3 a1.5 1.5 0 0 0 1.5 -1.5 V8"/><path d="M5.3 9.6 L5.9 6.7 L11.2 1.4 a1.25 1.25 0 0 1 1.8 0 L13.6 2 a1.25 1.25 0 0 1 0 1.8 L8.3 9.1 Z" stroke-width="1.35"/><path d="M10.3 2.6 L12.4 4.7" stroke-width="1"/></g></svg><span class="t" style="left:57px;top:1px;line-height:20px">19 - Plakáty 19%</span></div>
<div class="ln" style="left:342px;top:648px;width:1362px;height:1px"></div>
<div class="row l" style="left:342px;top:649px;width:1362px"><span class="ln" style="left:25px;top:0;width:1px;height:20px"></span><span class="ln" style="left:51px;top:0;width:1px;height:20px"></span><svg class="abs" style="left:6px;top:4px" width="15" height="12" viewBox="0 0 15 12"><path d="M0 .9 Q3.8 .7 7 2.3 V11.9 Q3.8 10.2 0 10.2 Z M15 .9 Q11.2 .7 8 2.3 V11.9 Q11.2 10.2 15 10.2 Z" fill="#8c8c8c"/></svg><svg class="abs" style="left:31px;top:4px" width="15" height="13" viewBox="0 0 15 13"><g fill="none" stroke="#2d5bb0" stroke-width="1.5" stroke-linejoin="round"><path d="M8 2.3 H2.4 a1.5 1.5 0 0 0 -1.5 1.5 V10.6 a1.5 1.5 0 0 0 1.5 1.5 H9.3 a1.5 1.5 0 0 0 1.5 -1.5 V8"/><path d="M5.3 9.6 L5.9 6.7 L11.2 1.4 a1.25 1.25 0 0 1 1.8 0 L13.6 2 a1.25 1.25 0 0 1 0 1.8 L8.3 9.1 Z" stroke-width="1.35"/><path d="M10.3 2.6 L12.4 4.7" stroke-width="1"/></g></svg><span class="t" style="left:57px;top:1px;line-height:20px">25 - omal,vystřihovánky 9%</span></div>
<div class="ln" style="left:342px;top:669px;width:1362px;height:1px"></div>
<div class="row d" style="left:342px;top:670px;width:1362px"><span class="ln" style="left:25px;top:0;width:1px;height:20px"></span><span class="ln" style="left:51px;top:0;width:1px;height:20px"></span><svg class="abs" style="left:6px;top:4px" width="15" height="12" viewBox="0 0 15 12"><path d="M0 .9 Q3.8 .7 7 2.3 V11.9 Q3.8 10.2 0 10.2 Z M15 .9 Q11.2 .7 8 2.3 V11.9 Q11.2 10.2 15 10.2 Z" fill="#8c8c8c"/></svg><svg class="abs" style="left:31px;top:4px" width="15" height="13" viewBox="0 0 15 13"><g fill="none" stroke="#2d5bb0" stroke-width="1.5" stroke-linejoin="round"><path d="M8 2.3 H2.4 a1.5 1.5 0 0 0 -1.5 1.5 V10.6 a1.5 1.5 0 0 0 1.5 1.5 H9.3 a1.5 1.5 0 0 0 1.5 -1.5 V8"/><path d="M5.3 9.6 L5.9 6.7 L11.2 1.4 a1.25 1.25 0 0 1 1.8 0 L13.6 2 a1.25 1.25 0 0 1 0 1.8 L8.3 9.1 Z" stroke-width="1.35"/><path d="M10.3 2.6 L12.4 4.7" stroke-width="1"/></g></svg><span class="t" style="left:57px;top:1px;line-height:20px">27 - Výrobky ze dřeva</span></div>
<div class="ln" style="left:342px;top:690px;width:1362px;height:1px"></div>
<div class="row l" style="left:342px;top:691px;width:1362px"><span class="ln" style="left:25px;top:0;width:1px;height:20px"></span><span class="ln" style="left:51px;top:0;width:1px;height:20px"></span><svg class="abs" style="left:6px;top:4px" width="15" height="12" viewBox="0 0 15 12"><path d="M0 .9 Q3.8 .7 7 2.3 V11.9 Q3.8 10.2 0 10.2 Z M15 .9 Q11.2 .7 8 2.3 V11.9 Q11.2 10.2 15 10.2 Z" fill="#8c8c8c"/></svg><svg class="abs" style="left:31px;top:4px" width="15" height="13" viewBox="0 0 15 13"><g fill="none" stroke="#2d5bb0" stroke-width="1.5" stroke-linejoin="round"><path d="M8 2.3 H2.4 a1.5 1.5 0 0 0 -1.5 1.5 V10.6 a1.5 1.5 0 0 0 1.5 1.5 H9.3 a1.5 1.5 0 0 0 1.5 -1.5 V8"/><path d="M5.3 9.6 L5.9 6.7 L11.2 1.4 a1.25 1.25 0 0 1 1.8 0 L13.6 2 a1.25 1.25 0 0 1 0 1.8 L8.3 9.1 Z" stroke-width="1.35"/><path d="M10.3 2.6 L12.4 4.7" stroke-width="1"/></g></svg><span class="t" style="left:57px;top:1px;line-height:20px">33 - Papír. zboží(pexeso) 19%</span></div>
<div class="ln" style="left:342px;top:711px;width:1362px;height:1px"></div>
<div class="row l" style="left:285px;top:715px;width:1425px"><span class="ln" style="left:25px;top:0;width:1px;height:20px"></span><span class="ln" style="left:51px;top:0;width:1px;height:20px"></span><svg class="abs" style="left:6px;top:4px" width="15" height="12" viewBox="0 0 15 12"><path d="M0 .9 Q3.8 .7 7 2.3 V11.9 Q3.8 10.2 0 10.2 Z M15 .9 Q11.2 .7 8 2.3 V11.9 Q11.2 10.2 15 10.2 Z" fill="#0a3fa0"/></svg><svg class="abs" style="left:31px;top:4px" width="15" height="13" viewBox="0 0 15 13"><g fill="none" stroke="#2d5bb0" stroke-width="1.5" stroke-linejoin="round"><path d="M8 2.3 H2.4 a1.5 1.5 0 0 0 -1.5 1.5 V10.6 a1.5 1.5 0 0 0 1.5 1.5 H9.3 a1.5 1.5 0 0 0 1.5 -1.5 V8"/><path d="M5.3 9.6 L5.9 6.7 L11.2 1.4 a1.25 1.25 0 0 1 1.8 0 L13.6 2 a1.25 1.25 0 0 1 0 1.8 L8.3 9.1 Z" stroke-width="1.35"/><path d="M10.3 2.6 L12.4 4.7" stroke-width="1"/></g></svg><span class="t" style="left:57px;top:1px;line-height:20px">00-TS knihy 19%</span></div>
<div class="ln" style="left:285px;top:735px;width:1425px;height:1px"></div>
<div class="row d" style="left:285px;top:736px;width:1425px"><span class="ln" style="left:25px;top:0;width:1px;height:20px"></span><span class="ln" style="left:51px;top:0;width:1px;height:20px"></span><svg class="abs" style="left:6px;top:4px" width="15" height="12" viewBox="0 0 15 12"><path d="M0 .9 Q3.8 .7 7 2.3 V11.9 Q3.8 10.2 0 10.2 Z M15 .9 Q11.2 .7 8 2.3 V11.9 Q11.2 10.2 15 10.2 Z" fill="#8c8c8c"/></svg><svg class="abs" style="left:31px;top:4px" width="15" height="13" viewBox="0 0 15 13"><g fill="none" stroke="#2d5bb0" stroke-width="1.5" stroke-linejoin="round"><path d="M8 2.3 H2.4 a1.5 1.5 0 0 0 -1.5 1.5 V10.6 a1.5 1.5 0 0 0 1.5 1.5 H9.3 a1.5 1.5 0 0 0 1.5 -1.5 V8"/><path d="M5.3 9.6 L5.9 6.7 L11.2 1.4 a1.25 1.25 0 0 1 1.8 0 L13.6 2 a1.25 1.25 0 0 1 0 1.8 L8.3 9.1 Z" stroke-width="1.35"/><path d="M10.3 2.6 L12.4 4.7" stroke-width="1"/></g></svg><span class="t" style="left:57px;top:1px;line-height:20px">01 - akvaristika</span></div>
<div class="ln" style="left:285px;top:756px;width:1425px;height:1px"></div>
<div class="row l" style="left:285px;top:757px;width:1425px"><span class="ln" style="left:25px;top:0;width:1px;height:20px"></span><span class="ln" style="left:51px;top:0;width:1px;height:20px"></span><svg class="abs" style="left:6px;top:4px" width="15" height="12" viewBox="0 0 15 12"><path d="M0 .9 Q3.8 .7 7 2.3 V11.9 Q3.8 10.2 0 10.2 Z M15 .9 Q11.2 .7 8 2.3 V11.9 Q11.2 10.2 15 10.2 Z" fill="#0a3fa0"/></svg><svg class="abs" style="left:31px;top:4px" width="15" height="13" viewBox="0 0 15 13"><g fill="none" stroke="#2d5bb0" stroke-width="1.5" stroke-linejoin="round"><path d="M8 2.3 H2.4 a1.5 1.5 0 0 0 -1.5 1.5 V10.6 a1.5 1.5 0 0 0 1.5 1.5 H9.3 a1.5 1.5 0 0 0 1.5 -1.5 V8"/><path d="M5.3 9.6 L5.9 6.7 L11.2 1.4 a1.25 1.25 0 0 1 1.8 0 L13.6 2 a1.25 1.25 0 0 1 0 1.8 L8.3 9.1 Z" stroke-width="1.35"/><path d="M10.3 2.6 L12.4 4.7" stroke-width="1"/></g></svg><svg class="abs" style="left:57px;top:5px" width="7.5" height="10.5" viewBox="0 0 7.5 10.5"><path d="M1.4 1.2 L5.6 5.25 L1.4 9.3" fill="none" stroke="#000" stroke-width="2.1"/></svg><span class="t" style="left:70px;top:1px;line-height:20px">01 - Ekonomika</span></div>
<div class="ln" style="left:285px;top:777px;width:1425px;height:1px"></div>
<div class="row l" style="left:342px;top:781px;width:1362px"><span class="ln" style="left:25px;top:0;width:1px;height:20px"></span><span class="ln" style="left:51px;top:0;width:1px;height:20px"></span><svg class="abs" style="left:6px;top:4px" width="15" height="12" viewBox="0 0 15 12"><path d="M0 .9 Q3.8 .7 7 2.3 V11.9 Q3.8 10.2 0 10.2 Z M15 .9 Q11.2 .7 8 2.3 V11.9 Q11.2 10.2 15 10.2 Z" fill="#8c8c8c"/></svg><svg class="abs" style="left:31px;top:4px" width="15" height="13" viewBox="0 0 15 13"><g fill="none" stroke="#2d5bb0" stroke-width="1.5" stroke-linejoin="round"><path d="M8 2.3 H2.4 a1.5 1.5 0 0 0 -1.5 1.5 V10.6 a1.5 1.5 0 0 0 1.5 1.5 H9.3 a1.5 1.5 0 0 0 1.5 -1.5 V8"/><path d="M5.3 9.6 L5.9 6.7 L11.2 1.4 a1.25 1.25 0 0 1 1.8 0 L13.6 2 a1.25 1.25 0 0 1 0 1.8 L8.3 9.1 Z" stroke-width="1.35"/><path d="M10.3 2.6 L12.4 4.7" stroke-width="1"/></g></svg><span class="t" style="left:57px;top:1px;line-height:20px">01 - bankovnictví</span></div>
<div class="ln" style="left:342px;top:801px;width:1362px;height:1px"></div>
<div class="row d" style="left:342px;top:802px;width:1362px"><span class="ln" style="left:25px;top:0;width:1px;height:20px"></span><span class="ln" style="left:51px;top:0;width:1px;height:20px"></span><svg class="abs" style="left:6px;top:4px" width="15" height="12" viewBox="0 0 15 12"><path d="M0 .9 Q3.8 .7 7 2.3 V11.9 Q3.8 10.2 0 10.2 Z M15 .9 Q11.2 .7 8 2.3 V11.9 Q11.2 10.2 15 10.2 Z" fill="#8c8c8c"/></svg><svg class="abs" style="left:31px;top:4px" width="15" height="13" viewBox="0 0 15 13"><g fill="none" stroke="#2d5bb0" stroke-width="1.5" stroke-linejoin="round"><path d="M8 2.3 H2.4 a1.5 1.5 0 0 0 -1.5 1.5 V10.6 a1.5 1.5 0 0 0 1.5 1.5 H9.3 a1.5 1.5 0 0 0 1.5 -1.5 V8"/><path d="M5.3 9.6 L5.9 6.7 L11.2 1.4 a1.25 1.25 0 0 1 1.8 0 L13.6 2 a1.25 1.25 0 0 1 0 1.8 L8.3 9.1 Z" stroke-width="1.35"/><path d="M10.3 2.6 L12.4 4.7" stroke-width="1"/></g></svg><span class="t" style="left:57px;top:1px;line-height:20px">03 - daně</span></div>
<div class="ln" style="left:342px;top:822px;width:1362px;height:1px"></div>
<div class="row l" style="left:342px;top:823px;width:1362px"><span class="ln" style="left:25px;top:0;width:1px;height:20px"></span><span class="ln" style="left:51px;top:0;width:1px;height:20px"></span><svg class="abs" style="left:6px;top:4px" width="15" height="12" viewBox="0 0 15 12"><path d="M0 .9 Q3.8 .7 7 2.3 V11.9 Q3.8 10.2 0 10.2 Z M15 .9 Q11.2 .7 8 2.3 V11.9 Q11.2 10.2 15 10.2 Z" fill="#8c8c8c"/></svg><svg class="abs" style="left:31px;top:4px" width="15" height="13" viewBox="0 0 15 13"><g fill="none" stroke="#2d5bb0" stroke-width="1.5" stroke-linejoin="round"><path d="M8 2.3 H2.4 a1.5 1.5 0 0 0 -1.5 1.5 V10.6 a1.5 1.5 0 0 0 1.5 1.5 H9.3 a1.5 1.5 0 0 0 1.5 -1.5 V8"/><path d="M5.3 9.6 L5.9 6.7 L11.2 1.4 a1.25 1.25 0 0 1 1.8 0 L13.6 2 a1.25 1.25 0 0 1 0 1.8 L8.3 9.1 Z" stroke-width="1.35"/><path d="M10.3 2.6 L12.4 4.7" stroke-width="1"/></g></svg><span class="t" style="left:57px;top:1px;line-height:20px">04 - ekonomika</span></div>
<div class="ln" style="left:342px;top:843px;width:1362px;height:1px"></div>
<div class="row d" style="left:342px;top:844px;width:1362px"><span class="ln" style="left:25px;top:0;width:1px;height:20px"></span><span class="ln" style="left:51px;top:0;width:1px;height:20px"></span><svg class="abs" style="left:6px;top:4px" width="15" height="12" viewBox="0 0 15 12"><path d="M0 .9 Q3.8 .7 7 2.3 V11.9 Q3.8 10.2 0 10.2 Z M15 .9 Q11.2 .7 8 2.3 V11.9 Q11.2 10.2 15 10.2 Z" fill="#8c8c8c"/></svg><svg class="abs" style="left:31px;top:4px" width="15" height="13" viewBox="0 0 15 13"><g fill="none" stroke="#2d5bb0" stroke-width="1.5" stroke-linejoin="round"><path d="M8 2.3 H2.4 a1.5 1.5 0 0 0 -1.5 1.5 V10.6 a1.5 1.5 0 0 0 1.5 1.5 H9.3 a1.5 1.5 0 0 0 1.5 -1.5 V8"/><path d="M5.3 9.6 L5.9 6.7 L11.2 1.4 a1.25 1.25 0 0 1 1.8 0 L13.6 2 a1.25 1.25 0 0 1 0 1.8 L8.3 9.1 Z" stroke-width="1.35"/><path d="M10.3 2.6 L12.4 4.7" stroke-width="1"/></g></svg><span class="t" style="left:57px;top:1px;line-height:20px">05 - obchod a podnikání</span></div>
<div class="ln" style="left:342px;top:864px;width:1362px;height:1px"></div>
<div class="row h" style="left:342px;top:865px;width:1362px"><span class="ln" style="left:25px;top:0;width:1px;height:20px"></span><span class="ln" style="left:51px;top:0;width:1px;height:20px"></span><svg class="abs" style="left:6px;top:4px" width="15" height="12" viewBox="0 0 15 12"><path d="M0 .9 Q3.8 .7 7 2.3 V11.9 Q3.8 10.2 0 10.2 Z M15 .9 Q11.2 .7 8 2.3 V11.9 Q11.2 10.2 15 10.2 Z" fill="#8c8c8c"/></svg><svg class="abs" style="left:31px;top:4px" width="15" height="13" viewBox="0 0 15 13"><g fill="none" stroke="#2d5bb0" stroke-width="1.5" stroke-linejoin="round"><path d="M8 2.3 H2.4 a1.5 1.5 0 0 0 -1.5 1.5 V10.6 a1.5 1.5 0 0 0 1.5 1.5 H9.3 a1.5 1.5 0 0 0 1.5 -1.5 V8"/><path d="M5.3 9.6 L5.9 6.7 L11.2 1.4 a1.25 1.25 0 0 1 1.8 0 L13.6 2 a1.25 1.25 0 0 1 0 1.8 L8.3 9.1 Z" stroke-width="1.35"/><path d="M10.3 2.6 L12.4 4.7" stroke-width="1"/></g></svg><span class="t" style="left:57px;top:1px;line-height:20px">07 - právnická literatura</span></div>
<div class="ln" style="left:342px;top:885px;width:1362px;height:1px"></div>
<div class="row d" style="left:342px;top:886px;width:1362px"><span class="ln" style="left:25px;top:0;width:1px;height:20px"></span><span class="ln" style="left:51px;top:0;width:1px;height:20px"></span><svg class="abs" style="left:6px;top:4px" width="15" height="12" viewBox="0 0 15 12"><path d="M0 .9 Q3.8 .7 7 2.3 V11.9 Q3.8 10.2 0 10.2 Z M15 .9 Q11.2 .7 8 2.3 V11.9 Q11.2 10.2 15 10.2 Z" fill="#8c8c8c"/></svg><svg class="abs" style="left:31px;top:4px" width="15" height="13" viewBox="0 0 15 13"><g fill="none" stroke="#2d5bb0" stroke-width="1.5" stroke-linejoin="round"><path d="M8 2.3 H2.4 a1.5 1.5 0 0 0 -1.5 1.5 V10.6 a1.5 1.5 0 0 0 1.5 1.5 H9.3 a1.5 1.5 0 0 0 1.5 -1.5 V8"/><path d="M5.3 9.6 L5.9 6.7 L11.2 1.4 a1.25 1.25 0 0 1 1.8 0 L13.6 2 a1.25 1.25 0 0 1 0 1.8 L8.3 9.1 Z" stroke-width="1.35"/><path d="M10.3 2.6 L12.4 4.7" stroke-width="1"/></g></svg><span class="t" style="left:57px;top:1px;line-height:20px">08 - účetnictví</span></div>
<div class="ln" style="left:342px;top:906px;width:1362px;height:1px"></div>
<div class="row l" style="left:342px;top:907px;width:1362px"><span class="ln" style="left:25px;top:0;width:1px;height:20px"></span><span class="ln" style="left:51px;top:0;width:1px;height:20px"></span><svg class="abs" style="left:6px;top:4px" width="15" height="12" viewBox="0 0 15 12"><path d="M0 .9 Q3.8 .7 7 2.3 V11.9 Q3.8 10.2 0 10.2 Z M15 .9 Q11.2 .7 8 2.3 V11.9 Q11.2 10.2 15 10.2 Z" fill="#8c8c8c"/></svg><svg class="abs" style="left:31px;top:4px" width="15" height="13" viewBox="0 0 15 13"><g fill="none" stroke="#2d5bb0" stroke-width="1.5" stroke-linejoin="round"><path d="M8 2.3 H2.4 a1.5 1.5 0 0 0 -1.5 1.5 V10.6 a1.5 1.5 0 0 0 1.5 1.5 H9.3 a1.5 1.5 0 0 0 1.5 -1.5 V8"/><path d="M5.3 9.6 L5.9 6.7 L11.2 1.4 a1.25 1.25 0 0 1 1.8 0 L13.6 2 a1.25 1.25 0 0 1 0 1.8 L8.3 9.1 Z" stroke-width="1.35"/><path d="M10.3 2.6 L12.4 4.7" stroke-width="1"/></g></svg><span class="t" style="left:57px;top:1px;line-height:20px">99 - ostatní</span></div>
<div class="ln" style="left:342px;top:927px;width:1362px;height:1px"></div>
<div class="row d" style="left:285px;top:931px;width:1425px"><span class="ln" style="left:25px;top:0;width:1px;height:20px"></span><span class="ln" style="left:51px;top:0;width:1px;height:20px"></span><svg class="abs" style="left:6px;top:4px" width="15" height="12" viewBox="0 0 15 12"><path d="M0 .9 Q3.8 .7 7 2.3 V11.9 Q3.8 10.2 0 10.2 Z M15 .9 Q11.2 .7 8 2.3 V11.9 Q11.2 10.2 15 10.2 Z" fill="#0a3fa0"/></svg><svg class="abs" style="left:31px;top:4px" width="15" height="13" viewBox="0 0 15 13"><g fill="none" stroke="#2d5bb0" stroke-width="1.5" stroke-linejoin="round"><path d="M8 2.3 H2.4 a1.5 1.5 0 0 0 -1.5 1.5 V10.6 a1.5 1.5 0 0 0 1.5 1.5 H9.3 a1.5 1.5 0 0 0 1.5 -1.5 V8"/><path d="M5.3 9.6 L5.9 6.7 L11.2 1.4 a1.25 1.25 0 0 1 1.8 0 L13.6 2 a1.25 1.25 0 0 1 0 1.8 L8.3 9.1 Z" stroke-width="1.35"/><path d="M10.3 2.6 L12.4 4.7" stroke-width="1"/></g></svg><span class="t" style="left:57px;top:1px;line-height:20px">01 TS -Ekonomie-9%</span></div>
<div class="ln" style="left:285px;top:951px;width:1425px;height:1px"></div>
<div class="row l" style="left:285px;top:952px;width:1425px"><span class="ln" style="left:25px;top:0;width:1px;height:20px"></span><span class="ln" style="left:51px;top:0;width:1px;height:20px"></span><svg class="abs" style="left:6px;top:4px" width="15" height="12" viewBox="0 0 15 12"><path d="M0 .9 Q3.8 .7 7 2.3 V11.9 Q3.8 10.2 0 10.2 Z M15 .9 Q11.2 .7 8 2.3 V11.9 Q11.2 10.2 15 10.2 Z" fill="#8c8c8c"/></svg><svg class="abs" style="left:31px;top:4px" width="15" height="13" viewBox="0 0 15 13"><g fill="none" stroke="#2d5bb0" stroke-width="1.5" stroke-linejoin="round"><path d="M8 2.3 H2.4 a1.5 1.5 0 0 0 -1.5 1.5 V10.6 a1.5 1.5 0 0 0 1.5 1.5 H9.3 a1.5 1.5 0 0 0 1.5 -1.5 V8"/><path d="M5.3 9.6 L5.9 6.7 L11.2 1.4 a1.25 1.25 0 0 1 1.8 0 L13.6 2 a1.25 1.25 0 0 1 0 1.8 L8.3 9.1 Z" stroke-width="1.35"/><path d="M10.3 2.6 L12.4 4.7" stroke-width="1"/></g></svg><span class="t" style="left:57px;top:1px;line-height:20px">02 - chovatelství</span></div>
<div class="ln" style="left:285px;top:972px;width:1425px;height:1px"></div>
<div class="row d" style="left:285px;top:973px;width:1425px"><span class="ln" style="left:25px;top:0;width:1px;height:20px"></span><span class="ln" style="left:51px;top:0;width:1px;height:20px"></span><svg class="abs" style="left:6px;top:4px" width="15" height="12" viewBox="0 0 15 12"><path d="M0 .9 Q3.8 .7 7 2.3 V11.9 Q3.8 10.2 0 10.2 Z M15 .9 Q11.2 .7 8 2.3 V11.9 Q11.2 10.2 15 10.2 Z" fill="#0a3fa0"/></svg><svg class="abs" style="left:31px;top:4px" width="15" height="13" viewBox="0 0 15 13"><g fill="none" stroke="#2d5bb0" stroke-width="1.5" stroke-linejoin="round"><path d="M8 2.3 H2.4 a1.5 1.5 0 0 0 -1.5 1.5 V10.6 a1.5 1.5 0 0 0 1.5 1.5 H9.3 a1.5 1.5 0 0 0 1.5 -1.5 V8"/><path d="M5.3 9.6 L5.9 6.7 L11.2 1.4 a1.25 1.25 0 0 1 1.8 0 L13.6 2 a1.25 1.25 0 0 1 0 1.8 L8.3 9.1 Z" stroke-width="1.35"/><path d="M10.3 2.6 L12.4 4.7" stroke-width="1"/></g></svg><svg class="abs" style="left:57px;top:5px" width="7.5" height="10.5" viewBox="0 0 7.5 10.5"><path d="M1.4 1.2 L5.6 5.25 L1.4 9.3" fill="none" stroke="#000" stroke-width="2.1"/></svg><span class="t" style="left:70px;top:1px;line-height:20px">02 - Společenské vědy, osvěta</span></div>
<div class="ln" style="left:285px;top:993px;width:1425px;height:1px"></div>
<div class="abs" style="left:0;top:990px;width:1920px;height:60px;background:#cfe4f4"></div>
<div class="abs" style="left:0;top:989px;width:1920px;height:1px;background:#7f8a99"></div>
<div class="abs" style="left:1903px;top:180px;width:17px;height:809px;background:#f1f1f1"></div>
<div class="abs" style="left:1905px;top:197px;width:13px;height:42px;background:#c1c1c1"></div>
<svg class="abs" style="left:1906px;top:184px" width="11" height="8" viewBox="0 0 11 8"><path d="M1.5 6.5 L5.5 2.5 L9.5 6.5 Z" fill="#a3a3a3"/></svg>
<svg class="abs" style="left:1906px;top:975px" width="11" height="8" viewBox="0 0 11 8"><path d="M1.5 1.5 L5.5 5.5 L9.5 1.5 Z" fill="#505050"/></svg>
<div class="abs" style="left:957px;top:376px;width:784px;height:434px;background:#cfe4f4;box-shadow:0 2px 12px 1px rgba(0,0,0,.30)"></div>
<div class="abs" style="left:957px;top:376px;width:784px;height:31px;background:#0b1a35"></div>
<div class="abs" style="left:957px;top:407px;width:784px;height:29px;background:#202124"></div>
<svg class="abs" style="left:961px;top:383px" width="16.5" height="16.5" viewBox="0 0 16 16"><circle cx="8" cy="8" r="8" fill="#e8601c"/><path d="M3.2 3.7 L7.3 5.3 V13.1 L3.2 10.8 Z" fill="#fff"/><path d="M7.9 5.6 H12.5 V12.3 H7.9 Z" fill="#f3b69c"/><path d="M9 6.6 H11.5 V11.3 H9 Z" fill="#ee9a78"/></svg>
<div class="t ui" style="left:982px;top:385.5px;font-size:12px;line-height:14px;color:#838da1">https://demo5001.betaz.eu/categ/CCae.php?auto=56 - Google Chrome</div>
<div class="abs" style="left:1621px;top:391px;width:10px;height:1px;background:#6f7a8f"></div>
<svg class="abs" style="left:1666px;top:385px" width="12" height="12" viewBox="0 0 12 12"><rect x="1.5" y="1.5" width="9" height="9" fill="none" stroke="#6f7a8f" stroke-width="1"/></svg>
<svg class="abs" style="left:1712px;top:385px" width="12" height="12" viewBox="0 0 12 12"><path d="M1 1 L11 11 M11 1 L1 11" stroke="#6f7a8f" stroke-width="1.1" fill="none"/></svg>
<svg class="abs" style="left:970px;top:415px" width="9" height="12" viewBox="0 0 10 13"><path d="M2.6 5.5 V3.6 a2.4 2.4 0 0 1 4.8 0 V5.5" stroke="#9aa0a6" stroke-width="1.4" fill="none"/><rect x="0.8" y="5.3" width="8.4" height="6.7" rx="1" fill="#9aa0a6"/></svg>
<div class="t ui" style="left:991px;top:414px;font-size:14px;line-height:16px;color:#fff;letter-spacing:-.11px">demo5001.betaz.eu<span style="color:#9aa0a6">/categ/CCae.php?auto=56</span></div>
<div class="abs" style="left:958px;top:436px;width:782px;height:36px;background:#a9c9f0"></div>
<div class="nc" style="top:437px;height:34px;line-height:35px;left:958px;width:260px"><svg width="12" height="12" viewBox="0 0 12 12" style="vertical-align:-1px;margin-right:4px"><path d="M1.3 0 H8.6 L12 3.4 V10.7 A1.3 1.3 0 0 1 10.7 12 H1.3 A1.3 1.3 0 0 1 0 10.7 V1.3 A1.3 1.3 0 0 1 1.3 0 Z M1.8 1.8 V4.6 H8 V1.8 Z M6 6.2 A1.9 1.9 0 1 0 6 10 A1.9 1.9 0 1 0 6 6.2 Z" fill="#fff" fill-rule="evenodd"/></svg>ULOŽIT</div>
<div class="nc" style="top:437px;height:34px;line-height:35px;left:1219px;width:260px"><svg width="11" height="13" viewBox="0 0 11 13" style="vertical-align:-2px;margin-right:4px"><path d="M0 1.6 H3.4 L4 .4 H7 L7.6 1.6 H11 V3 H0 Z M.9 4 H10.1 L9.5 12 a1 1 0 0 1 -1 1 H2.5 a1 1 0 0 1 -1 -1 Z" fill="#fff"/></svg>SMAZAT</div>
<div class="nc" style="top:437px;height:34px;line-height:35px;left:1480px;width:260px"><svg width="13" height="13" viewBox="0 0 13 13" style="vertical-align:-2px;margin-right:4px"><path d="M2.2 6.8 A4.6 4.6 0 1 0 4 2.8" fill="none" stroke="#fff" stroke-width="2"/><path d="M.4 .6 V5.8 H5.6 Z" fill="#fff"/></svg>ZPĚT</div>
<div class="abs" style="left:958px;top:472px;width:782px;height:34px;background:#0443a5"></div>
<div class="abs" style="left:958px;top:506px;width:782px;height:1px;background:#8f9bb0"></div>
<div class="t" style="left:1181px;top:482px;font-size:13px;line-height:16px;font-weight:bold;color:#fff">Úprava kategorie zboží: 01 - astrologie, horoskopy</div>
<div class="t" style="left:958px;width:197px;text-align:right;top:525px;line-height:16px;word-spacing:.5px;letter-spacing:.1px"><span style="color:#c41f3b;font-size:9.5px;margin-right:9px;position:relative;top:-.5px">✱</span>Název:</div>
<div class="abs ui" style="left:1172px;top:522px;width:200px;height:20px;background:#fff;border:1px solid #767676;border-radius:2px;font-size:13.33px;line-height:17px;padding-left:3px;white-space:pre">01 - astrologie, horoskopy</div>
<div class="t" style="left:958px;width:197px;text-align:right;top:553px;line-height:16px;word-spacing:.5px;letter-spacing:.1px">Nadřazená kategorie:</div>
<div class="abs ui" style="left:1172px;top:550px;width:525px;height:19px;background:#fff;border:1px solid #767676;border-radius:2px;font-size:13.33px;line-height:18px;padding-left:4px;white-space:pre">/0-Knihy/00-Duchovní 9%/<svg class="abs" style="right:4px;top:6px" width="10" height="6" viewBox="0 0 10 6"><path d="M1 1 L5 5 L9 1" fill="none" stroke="#000" stroke-width="1.8"/></svg></div>
<div class="t" style="left:958px;width:197px;text-align:right;top:590px;line-height:16px;word-spacing:.5px;letter-spacing:.1px">Koncový zákazník (EU):</div>
<div class="abs ui" style="left:1172px;top:587px;width:200px;height:20px;background:#fff;border:1px solid #767676;border-radius:2px;font-size:13.33px;line-height:17px;padding-left:3px;white-space:pre">0.00</div>
<div class="t" style="left:1377px;top:590px;line-height:16px">%</div>
<div class="t" style="left:958px;width:197px;text-align:right;top:618px;line-height:16px;word-spacing:.5px;letter-spacing:.1px">eshop neregistrovaní (D1):</div>
<div class="abs ui" style="left:1172px;top:615px;width:200px;height:20px;background:#fff;border:1px solid #767676;border-radius:2px;font-size:13.33px;line-height:17px;padding-left:3px;white-space:pre">0.00</div>
<div class="t" style="left:1377px;top:618px;line-height:16px">%</div>
<div class="t" style="left:958px;width:197px;text-align:right;top:646px;line-height:16px;word-spacing:.5px;letter-spacing:.1px">eshop registrovaní (D2):</div>
<div class="abs ui" style="left:1172px;top:643px;width:200px;height:20px;background:#fff;border:1px solid #767676;border-radius:2px;font-size:13.33px;line-height:17px;padding-left:3px;white-space:pre">0.00</div>
<div class="t" style="left:1377px;top:646px;line-height:16px">%</div>
<div class="t" style="left:958px;width:197px;text-align:right;top:673px;line-height:16px;word-spacing:.5px;letter-spacing:.1px">DPH:</div>
<div class="abs ui" style="left:1172px;top:671px;width:39px;height:19px;background:#fff;border:1px solid #767676;border-radius:2px;font-size:13.33px;line-height:16px;padding-left:5px;white-space:pre">10<svg class="abs" style="right:4px;top:5px" width="10" height="6" viewBox="0 0 10 6"><path d="M1 1 L5 5 L9 1" fill="none" stroke="#000" stroke-width="1.8"/></svg></div>
<div class="t" style="left:1216px;top:673px;line-height:16px">%</div>
<div class="t" style="left:958px;width:197px;text-align:right;top:715px;line-height:16px;word-spacing:.5px;letter-spacing:.1px">Popis:</div>
<div class="abs" style="left:1172px;top:698px;width:315px;height:49px;background:#fff;border:1px solid #767676;border-radius:2px"><svg class="abs" style="right:1px;bottom:1px" width="9" height="9" viewBox="0 0 9 9"><path d="M8.5 .5 L.5 8.5 M8.5 4.5 L4.5 8.5" stroke="#6b6b6b" stroke-width="1"/></svg></div>
<div class="t" style="left:966px;top:766px;line-height:16px">Editoval:</div>
<div class="t" style="left:1172px;top:766px;line-height:16px;font-weight:bold;word-spacing:.9px">Jana Staňková, 27.11.2021 19:27:42</div>
<div class="abs" style="left:957px;top:376px;width:784px;height:434px;border:1px solid #6d7b8c;border-top:0;pointer-events:none"></div>
<div class="abs" style="left:0;top:1019px;width:1920px;height:31px;background:#0443a5"></div>
<div class="t" style="left:0;width:1920px;text-align:center;top:1028px;line-height:16px;font-weight:bold;color:#a9c9f5;letter-spacing:.04px">Počet titulů: 93654 | SHERPA v 5.0 | Copyright © 2001-2021 <span style="color:#fff">BetaZ.cz s.r.o.</span>, tel. +420 602 543 170 email <span style="color:#fff">jana.betaz@seznam.cz</span></div>
<div class="abs" style="left:1919px;top:990px;width:1px;height:30px;background:#7f8a99"></div>
<div class="abs" style="left:0;top:1049px;width:1920px;height:1px;background:#6b8fd3"></div>
<div class="abs" style="left:0;top:990px;width:1px;height:29px;background:#7f8a99"></div>
<div class="abs" style="left:0;top:1019px;width:1px;height:31px;background:#6b8fd3"></div>
</body></html>
